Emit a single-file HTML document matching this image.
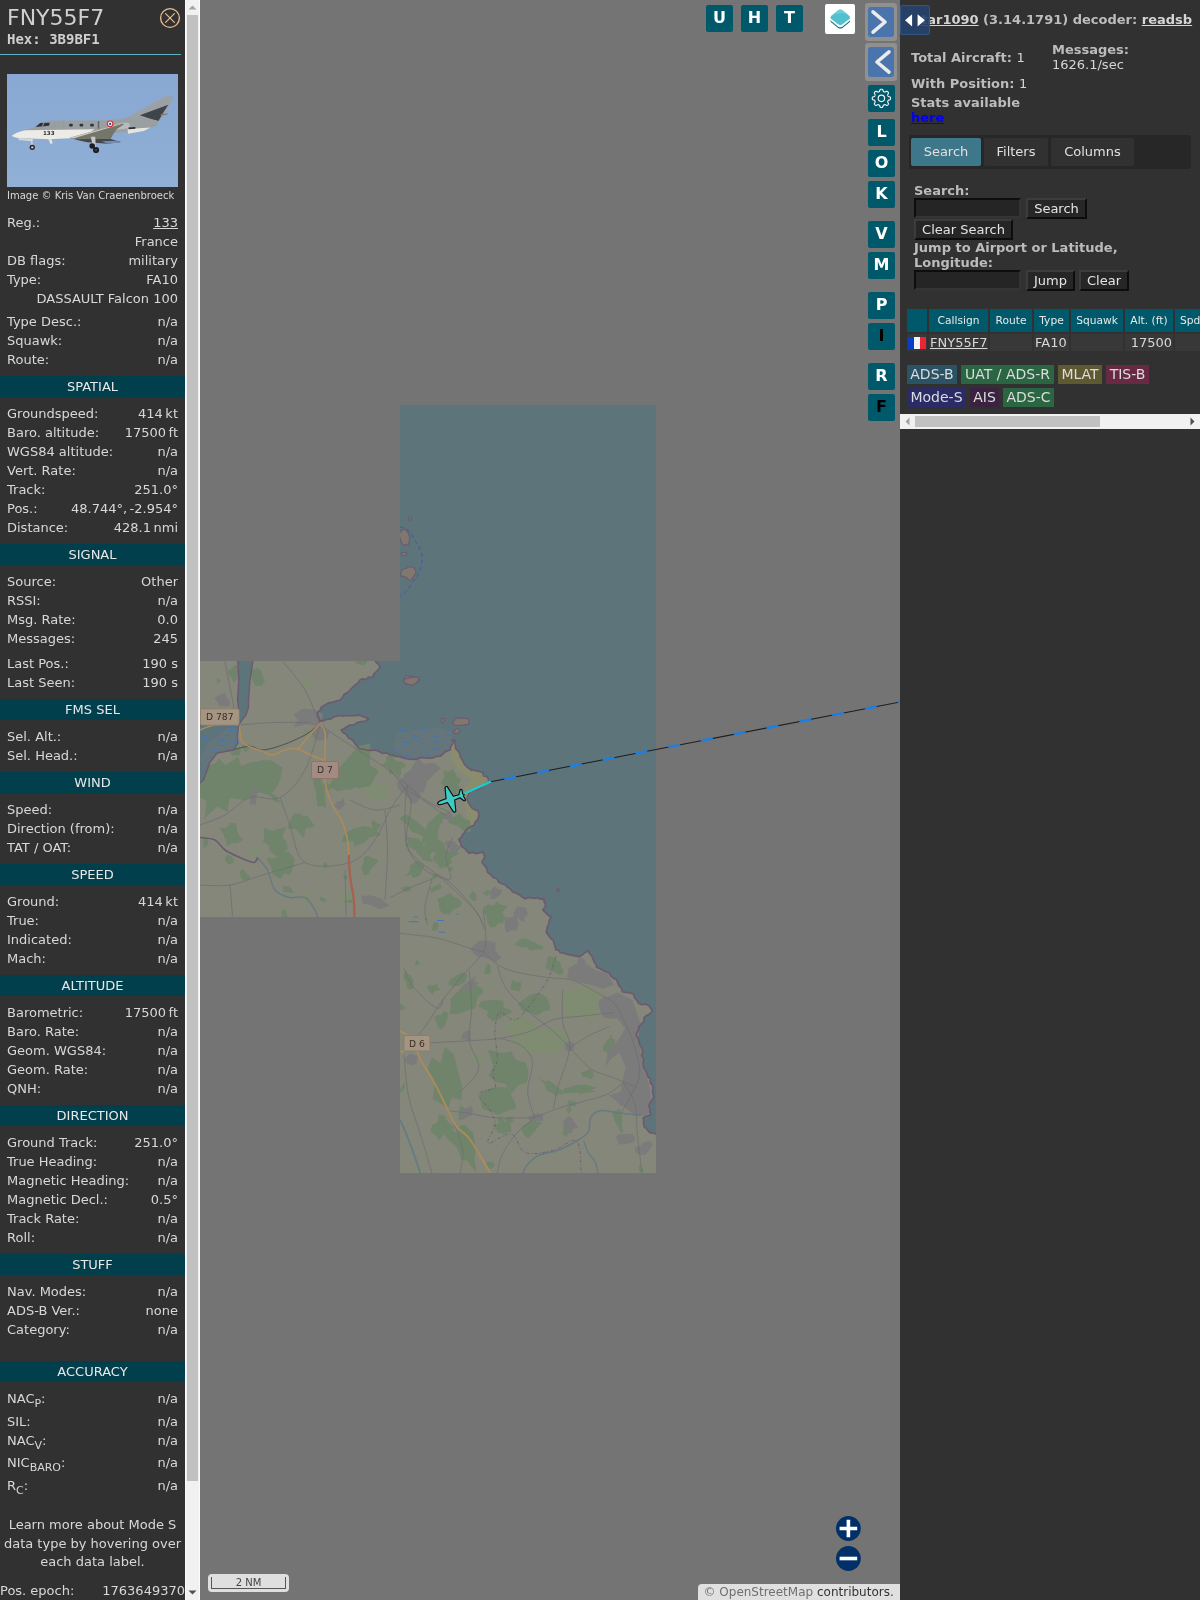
<!DOCTYPE html>
<html lang="en"><head><meta charset="utf-8"><title>tar1090</title>
<style>
html,body{margin:0;padding:0;width:1200px;height:1600px;overflow:hidden;background:#747474;font-family:"DejaVu Sans","Liberation Sans",sans-serif;font-size:13px;color:#d8d8d8}
#map{position:absolute;left:200px;top:0;width:700px;height:1600px;background:#747474;overflow:hidden}
#left{position:absolute;left:0;top:0;width:185px;height:1600px;background:#313131;overflow:hidden}
#lscroll{position:absolute;left:185px;top:0;width:15px;height:1600px;background:#f1f1f1;box-shadow:inset 1px 0 #fbfbfb,inset -1px 0 #fbfbfb}
#lscroll .thumb{position:absolute;left:2px;width:11px;top:15px;height:1466px;background:#c1c1c1}
#lscroll .arr{position:absolute;left:0}
#right{position:absolute;left:900px;top:0;width:300px;height:1600px;background:#313131;overflow:hidden}
.rw{position:absolute;left:7px;width:171px;height:18px;line-height:18px;font-size:13px;white-space:nowrap}
.rw .l{position:absolute;left:0;top:0}
.rw .v{position:absolute;right:0;top:0}
.rw .u{margin-left:2.5px}
.rw sub{font-size:11px;vertical-align:baseline;position:relative;top:4px;line-height:0}
.hd{position:absolute;left:0;width:185px;height:21px;line-height:21px;background:#003f4b;color:#e8e8e8;text-align:center;font-size:13px}
.learn{position:absolute;left:0;width:185px;text-align:center;line-height:18.5px;font-size:13px}
.rt{position:absolute;margin-top:1px;font-size:13px;line-height:16px;white-space:nowrap;color:#bcbcbc}
.b{font-weight:bold}
.n{font-weight:normal;color:#d6d6d6}
#tog{position:absolute;left:0;top:5px;width:30px;height:30px;background:rgba(38,68,108,.9);border:1px solid #34557f;box-sizing:border-box;border-radius:2px}
#tog svg{position:absolute;left:-1px;top:-1px}
#tabs{position:absolute;left:9px;top:135px;width:282px;height:34px;background:#272727;border-radius:3px}
.tab{position:absolute;top:3px;height:28px;line-height:27px;text-align:center;background:#313131;border-radius:2px;font-size:13px;color:#e0e0e0}
.tab.act{background:#3e7789}
.inp{position:absolute;width:107px;height:20px;box-sizing:border-box;background:#252525;border:2px solid;border-color:#0d0d0d #343434 #343434 #0d0d0d}
.btn{position:absolute;margin-top:-1px;height:17px;line-height:18px;text-align:center;font-size:13px;color:#e4e4e4;background:#262626;border:2px solid;border-color:#3c3c3c #0d0d0d #0d0d0d #3c3c3c;box-sizing:content-box}
.th{position:absolute;top:309px;height:23px;line-height:24px;background:#00596b;color:#e8e8e8;font-size:10.67px;text-align:center;overflow:hidden;white-space:nowrap}
.td{position:absolute;top:334px;height:17px;line-height:17px;background:#383838;font-size:13px;color:#d8d8d8;white-space:nowrap}
.lg{position:absolute;height:19px;line-height:19px;text-align:center;font-size:14px;color:#dcdcdc;white-space:nowrap}
#hscroll{position:absolute;left:0;top:414px;width:300px;height:15px;background:#f1f1f1}
#hscroll .thumb{position:absolute;left:15px;top:2px;width:185px;height:11px;background:#c1c1c1}
.mb{position:absolute;width:27px;height:27px;line-height:26px;text-align:center;background:#00596b;color:#fff;font-weight:bold;font-size:16px;border-radius:2px}
.mb.k{color:#000}
#layers{position:absolute;left:625px;top:4px;width:30px;height:30px;background:#fff;border-radius:2px}
.tgo{position:absolute;left:665px;width:32px;height:38px;background:#909090;border-radius:3px}
.tgi{position:absolute;left:3px;top:4px;width:26px;height:30px;background:#4a74ac;border-radius:3px}
#scale{position:absolute;left:8px;top:1574px;width:81px;height:18px;background:#dfdfdf;border-radius:4px}
#scale .in{position:absolute;left:3px;top:3px;width:73px;height:11px;border:1px solid #555;border-top:none;font-size:10px;line-height:12px;text-align:center;color:#444}
#attr{position:absolute;right:0;top:1584px;height:16px;width:202px;box-sizing:border-box;padding-left:5.5px;line-height:17px;font-size:12px;color:#333;background:#e0e0e0;border-top-left-radius:4px;white-space:nowrap}
#left,#right,#map,#lscroll{will-change:transform}

</style></head>
<body>
<div id="map">
<svg id="mapsvg" width="700" height="1600" viewBox="200 0 700 1600" style="position:absolute;left:0;top:0">
<defs><clipPath id="tiles"><rect x="400" y="405" width="256" height="256"/><rect x="144" y="661" width="512" height="256"/><rect x="400" y="917" width="256" height="256"/></clipPath></defs>
<defs><clipPath id="landclip"><polygon points="375.0,661.0 376.3,662.4 378.7,664.4 380.0,667.5 378.2,669.7 375.3,672.5 373.4,674.9 372.5,677.5 368.4,677.2 366.1,679.5 362.3,678.8 360.0,680.0 357.8,683.5 355.2,684.8 353.5,686.5 350.0,690.0 348.3,692.0 344.2,694.2 342.1,698.2 340.0,700.0 335.5,701.4 332.8,702.2 328.9,702.8 325.0,705.0 321.5,706.9 320.4,709.8 317.5,712.5 317.9,715.6 319.1,717.9 320.0,721.2 324.0,720.7 326.1,719.5 330.1,719.2 333.8,717.0 337.7,715.6 340.0,715.5 343.2,716.1 345.9,715.5 349.0,715.9 353.9,715.7 357.5,715.1 360.0,715.5 363.3,716.8 366.0,717.6 368.8,718.8 365.7,721.0 361.2,721.6 356.5,722.9 354.1,724.8 350.0,725.0 347.8,726.2 343.9,728.7 341.2,730.0 343.0,732.4 346.1,734.2 348.7,738.1 352.5,740.0 354.2,742.4 357.3,746.7 360.0,748.8 362.8,749.0 367.6,750.2 372.0,750.5 375.0,750.0 378.3,751.1 382.2,753.3 387.3,753.0 390.0,755.0 392.6,755.1 396.1,756.4 400.2,756.6 402.2,757.7 406.4,758.7 410.0,759.2 414.7,759.4 417.5,758.9 421.6,757.3 425.0,758.0 429.6,758.2 433.3,757.8 436.0,756.5 440.0,756.2 442.5,754.5 445.7,751.1 450.0,750.0 451.0,746.1 453.0,742.7 455.0,740.5 451.8,740.2 452.5,740.6 455.3,742.5 455.2,744.9 455.8,748.8 457.7,750.7 459.7,753.4 460.6,757.3 462.6,760.3 464.7,764.7 467.8,767.7 469.3,768.5 471.7,770.5 473.5,770.0 476.8,770.8 479.8,771.7 482.9,772.5 483.5,775.8 486.8,776.3 488.1,778.5 489.2,782.2 486.3,782.9 483.3,785.7 479.9,788.5 477.1,789.6 472.3,790.6 469.3,792.7 467.4,796.8 467.0,799.7 468.6,803.0 469.7,804.5 471.7,807.8 475.3,810.1 477.5,810.2 478.9,813.8 478.7,816.0 477.8,819.6 475.0,822.3 474.0,825.3 470.6,826.6 466.7,829.5 464.7,832.3 462.2,835.1 461.8,836.9 458.8,839.3 461.0,843.9 461.2,846.3 464.9,848.4 466.0,850.4 469.3,853.3 472.2,852.4 476.6,853.6 480.6,852.4 483.3,852.2 484.3,855.7 484.5,858.0 482.4,860.7 482.2,862.7 485.1,866.2 486.8,868.5 487.6,872.1 490.3,874.3 492.9,877.3 497.2,878.8 498.9,882.3 502.0,883.7 505.3,884.8 506.8,886.6 511.3,889.9 512.4,891.9 516.0,893.0 520.2,895.3 521.9,897.0 525.3,898.8 528.4,897.4 534.1,898.4 537.0,897.7 540.6,899.2 544.0,898.8 544.2,902.4 545.5,903.6 545.2,907.0 542.8,910.0 545.0,911.9 547.7,914.9 551.0,917.0 549.3,920.3 548.7,924.0 547.1,927.6 546.8,929.4 546.3,932.2 548.8,935.8 550.8,938.5 553.3,940.3 554.1,943.5 554.9,945.5 555.7,949.7 558.5,950.1 560.4,952.7 563.7,953.1 567.3,954.3 571.7,955.2 574.7,955.9 579.0,956.7 582.2,955.3 584.4,952.9 588.3,950.8 589.3,953.1 592.0,956.3 593.0,959.0 594.3,962.3 596.2,964.3 596.5,967.2 600.0,968.6 602.9,970.5 606.0,971.6 609.3,973.0 611.3,976.3 613.9,978.5 616.4,979.5 617.5,982.3 619.2,986.4 621.4,987.8 622.2,991.7 625.2,992.3 629.0,992.7 633.8,994.0 634.4,997.5 637.6,1001.1 638.5,1003.3 641.2,1004.6 645.9,1004.1 649.0,1005.7 651.6,1009.6 652.5,1011.5 649.2,1014.4 646.8,1015.4 644.3,1017.3 643.7,1021.6 640.8,1024.3 638.9,1027.1 638.5,1029.8 636.7,1032.7 636.2,1036.0 638.1,1037.9 639.2,1041.7 639.5,1044.4 642.0,1047.7 642.6,1051.2 641.6,1055.7 643.5,1059.2 643.2,1061.7 643.2,1064.1 643.9,1068.1 645.3,1069.6 646.7,1073.3 648.0,1077.2 650.3,1078.6 650.3,1083.0 652.5,1085.0 653.0,1089.3 652.4,1091.8 653.7,1096.7 652.5,1099.6 649.6,1103.9 649.0,1106.0 650.1,1109.4 649.6,1112.2 651.3,1114.2 647.7,1116.1 645.8,1116.1 643.2,1117.7 643.7,1121.7 643.4,1123.1 644.3,1127.0 646.3,1128.4 647.4,1130.1 650.2,1132.8 652.1,1132.8 656.0,1134.0 660.0,1134.0 660.0,1180.0 190.0,1180.0 190.0,655.0 375.0,655.0"/></clipPath></defs>
<g clip-path="url(#tiles)">
<rect x="144" y="405" width="512" height="768" fill="#5d747b"/>
<polygon points="375.0,661.0 376.3,662.4 378.7,664.4 380.0,667.5 378.2,669.7 375.3,672.5 373.4,674.9 372.5,677.5 368.4,677.2 366.1,679.5 362.3,678.8 360.0,680.0 357.8,683.5 355.2,684.8 353.5,686.5 350.0,690.0 348.3,692.0 344.2,694.2 342.1,698.2 340.0,700.0 335.5,701.4 332.8,702.2 328.9,702.8 325.0,705.0 321.5,706.9 320.4,709.8 317.5,712.5 317.9,715.6 319.1,717.9 320.0,721.2 324.0,720.7 326.1,719.5 330.1,719.2 333.8,717.0 337.7,715.6 340.0,715.5 343.2,716.1 345.9,715.5 349.0,715.9 353.9,715.7 357.5,715.1 360.0,715.5 363.3,716.8 366.0,717.6 368.8,718.8 365.7,721.0 361.2,721.6 356.5,722.9 354.1,724.8 350.0,725.0 347.8,726.2 343.9,728.7 341.2,730.0 343.0,732.4 346.1,734.2 348.7,738.1 352.5,740.0 354.2,742.4 357.3,746.7 360.0,748.8 362.8,749.0 367.6,750.2 372.0,750.5 375.0,750.0 378.3,751.1 382.2,753.3 387.3,753.0 390.0,755.0 392.6,755.1 396.1,756.4 400.2,756.6 402.2,757.7 406.4,758.7 410.0,759.2 414.7,759.4 417.5,758.9 421.6,757.3 425.0,758.0 429.6,758.2 433.3,757.8 436.0,756.5 440.0,756.2 442.5,754.5 445.7,751.1 450.0,750.0 451.0,746.1 453.0,742.7 455.0,740.5 451.8,740.2 452.5,740.6 455.3,742.5 455.2,744.9 455.8,748.8 457.7,750.7 459.7,753.4 460.6,757.3 462.6,760.3 464.7,764.7 467.8,767.7 469.3,768.5 471.7,770.5 473.5,770.0 476.8,770.8 479.8,771.7 482.9,772.5 483.5,775.8 486.8,776.3 488.1,778.5 489.2,782.2 486.3,782.9 483.3,785.7 479.9,788.5 477.1,789.6 472.3,790.6 469.3,792.7 467.4,796.8 467.0,799.7 468.6,803.0 469.7,804.5 471.7,807.8 475.3,810.1 477.5,810.2 478.9,813.8 478.7,816.0 477.8,819.6 475.0,822.3 474.0,825.3 470.6,826.6 466.7,829.5 464.7,832.3 462.2,835.1 461.8,836.9 458.8,839.3 461.0,843.9 461.2,846.3 464.9,848.4 466.0,850.4 469.3,853.3 472.2,852.4 476.6,853.6 480.6,852.4 483.3,852.2 484.3,855.7 484.5,858.0 482.4,860.7 482.2,862.7 485.1,866.2 486.8,868.5 487.6,872.1 490.3,874.3 492.9,877.3 497.2,878.8 498.9,882.3 502.0,883.7 505.3,884.8 506.8,886.6 511.3,889.9 512.4,891.9 516.0,893.0 520.2,895.3 521.9,897.0 525.3,898.8 528.4,897.4 534.1,898.4 537.0,897.7 540.6,899.2 544.0,898.8 544.2,902.4 545.5,903.6 545.2,907.0 542.8,910.0 545.0,911.9 547.7,914.9 551.0,917.0 549.3,920.3 548.7,924.0 547.1,927.6 546.8,929.4 546.3,932.2 548.8,935.8 550.8,938.5 553.3,940.3 554.1,943.5 554.9,945.5 555.7,949.7 558.5,950.1 560.4,952.7 563.7,953.1 567.3,954.3 571.7,955.2 574.7,955.9 579.0,956.7 582.2,955.3 584.4,952.9 588.3,950.8 589.3,953.1 592.0,956.3 593.0,959.0 594.3,962.3 596.2,964.3 596.5,967.2 600.0,968.6 602.9,970.5 606.0,971.6 609.3,973.0 611.3,976.3 613.9,978.5 616.4,979.5 617.5,982.3 619.2,986.4 621.4,987.8 622.2,991.7 625.2,992.3 629.0,992.7 633.8,994.0 634.4,997.5 637.6,1001.1 638.5,1003.3 641.2,1004.6 645.9,1004.1 649.0,1005.7 651.6,1009.6 652.5,1011.5 649.2,1014.4 646.8,1015.4 644.3,1017.3 643.7,1021.6 640.8,1024.3 638.9,1027.1 638.5,1029.8 636.7,1032.7 636.2,1036.0 638.1,1037.9 639.2,1041.7 639.5,1044.4 642.0,1047.7 642.6,1051.2 641.6,1055.7 643.5,1059.2 643.2,1061.7 643.2,1064.1 643.9,1068.1 645.3,1069.6 646.7,1073.3 648.0,1077.2 650.3,1078.6 650.3,1083.0 652.5,1085.0 653.0,1089.3 652.4,1091.8 653.7,1096.7 652.5,1099.6 649.6,1103.9 649.0,1106.0 650.1,1109.4 649.6,1112.2 651.3,1114.2 647.7,1116.1 645.8,1116.1 643.2,1117.7 643.7,1121.7 643.4,1123.1 644.3,1127.0 646.3,1128.4 647.4,1130.1 650.2,1132.8 652.1,1132.8 656.0,1134.0 660.0,1134.0 660.0,1180.0 190.0,1180.0 190.0,655.0 375.0,655.0" fill="#85877b"/>
<path d="M451.8 740.2 L457.7 750.7 L464.7 764.7 L471.7 770.5 L479.8 771.7 L486.8 776.3 L489.2 782.2 L483.3 785.7 L469.3 792.7 L467.0 799.7 L471.7 807.8 L477.5 810.2 L478.7 816.0 L474.0 825.3 L464.7 832.3 L460.0 827.7 L467.0 818.3 L464.7 804.3 L460.0 795.0 L467.0 785.7 L471.7 778.7 L460.0 771.7 L450.7 757.7 Z" fill="#8a8c6e"/>
<g clip-path="url(#landclip)"><path d="M509.9 1122.6 L507.3 1121.2 L504.3 1119.3 L506.8 1117.3 L510.0 1116.4 L514.0 1116.8 L512.7 1119.5 L514.2 1122.4 Z" fill="#6f846a"/><path d="M486.3 868.0 L484.2 867.7 L484.9 862.5 L486.5 859.7 L488.4 855.7 L488.6 860.5 L490.3 863.4 L488.0 866.3 Z" fill="#7f8c72"/><path d="M494.4 1164.9 L493.9 1166.7 L491.5 1169.1 L488.2 1167.4 L486.5 1164.8 L486.8 1161.1 L491.5 1162.3 L494.1 1162.8 Z" fill="#6f846a"/><path d="M498.5 673.7 L496.7 674.8 L495.2 673.8 L496.1 672.2 L496.7 670.4 L498.8 670.3 L499.4 671.5 L501.1 672.9 Z" fill="#6f846a"/><path d="M309.5 739.1 L308.6 737.0 L309.6 736.0 L310.3 733.9 L312.9 735.6 L313.8 738.0 L314.1 740.4 L311.7 740.4 Z" fill="#7f8c72"/><path d="M627.3 1039.5 L624.8 1038.3 L624.5 1036.5 L623.3 1033.6 L627.4 1034.7 L630.8 1034.2 L633.9 1036.7 L629.5 1038.2 Z" fill="#6f846a"/><path d="M433.4 992.3 L433.2 995.3 L429.1 991.1 L426.6 986.6 L429.1 986.8 L429.2 983.9 L433.2 987.9 L434.9 991.8 Z" fill="#6f846a"/><path d="M540.9 893.0 L540.7 894.6 L538.0 894.9 L535.2 894.1 L534.5 892.2 L536.6 891.4 L538.5 890.7 L540.5 891.7 Z" fill="#6f846a"/><path d="M563.1 931.6 L559.7 930.9 L557.8 931.2 L556.9 929.4 L556.3 926.4 L559.2 924.0 L562.3 925.3 L562.5 928.3 Z" fill="#7f8c72"/><path d="M599.6 832.4 L595.6 829.7 L597.4 827.0 L599.0 824.5 L603.2 825.9 L606.6 828.7 L605.2 831.4 L603.5 833.5 Z" fill="#6f846a"/><path d="M458.2 819.4 L458.3 817.7 L459.1 816.4 L461.4 814.1 L462.5 817.5 L462.1 819.6 L460.9 820.5 L459.5 820.5 Z" fill="#6f846a"/><path d="M514.9 990.3 L511.2 989.7 L510.7 984.5 L513.1 979.6 L516.5 982.3 L520.6 981.3 L521.3 986.7 L518.7 991.7 Z" fill="#6f846a"/><path d="M246.7 768.2 L246.1 766.7 L247.7 765.0 L249.4 764.7 L250.1 765.3 L250.2 766.1 L250.1 767.8 L248.4 767.8 Z" fill="#7f8c72"/><path d="M344.5 879.5 L343.7 878.2 L342.7 876.1 L344.9 875.8 L347.0 875.6 L348.0 877.6 L346.7 878.7 L346.1 880.0 Z" fill="#6f846a"/><path d="M448.3 773.6 L447.7 774.3 L444.2 773.8 L438.8 770.4 L442.2 770.2 L442.0 768.6 L446.2 770.3 L451.0 773.2 Z" fill="#7f8c72"/><path d="M281.3 915.1 L281.6 912.6 L282.6 909.3 L285.7 910.5 L286.4 913.5 L288.0 916.7 L285.0 916.8 L282.2 919.0 Z" fill="#6f846a"/><path d="M520.5 1070.3 L517.6 1066.5 L514.5 1065.3 L516.1 1062.4 L516.5 1060.4 L518.2 1060.7 L521.4 1062.5 L521.1 1066.5 Z" fill="#6f846a"/><path d="M305.1 900.7 L303.2 898.7 L303.8 896.0 L304.5 891.6 L308.4 892.0 L311.3 894.5 L309.2 898.0 L308.0 900.9 Z" fill="#7f8c72"/><path d="M554.1 958.8 L552.7 959.9 L550.3 960.3 L549.0 958.1 L551.3 956.3 L552.7 955.5 L554.3 955.7 L555.1 957.2 Z" fill="#7f8c72"/><path d="M436.8 745.3 L434.2 745.1 L437.0 742.6 L438.3 740.7 L441.1 739.1 L441.6 741.9 L440.2 744.9 L437.9 746.2 Z" fill="#7f8c72"/><path d="M245.4 769.9 L245.9 767.8 L247.5 765.4 L249.9 764.0 L250.7 764.8 L251.8 765.5 L249.8 767.8 L247.3 770.1 Z" fill="#6f846a"/><path d="M618.6 884.9 L615.1 887.1 L610.8 885.2 L608.7 881.3 L609.1 877.1 L613.1 876.0 L617.0 877.6 L618.4 881.1 Z" fill="#6f846a"/><path d="M248.7 879.6 L245.7 880.5 L241.6 879.1 L240.0 875.1 L239.6 871.2 L243.1 869.0 L246.6 873.7 L250.3 876.7 Z" fill="#6f846a"/><path d="M554.7 863.1 L550.3 863.7 L548.0 859.6 L551.5 856.6 L555.0 857.2 L558.7 856.9 L559.9 860.3 L558.8 864.0 Z" fill="#6f846a"/><path d="M429.2 989.6 L427.9 987.2 L432.7 985.4 L437.8 983.9 L437.4 987.1 L440.5 989.7 L434.4 991.1 L431.5 990.4 Z" fill="#6f846a"/><path d="M324.2 867.2 L323.1 865.8 L323.2 864.5 L323.8 862.8 L326.6 863.1 L327.7 865.4 L327.0 866.7 L326.5 868.6 Z" fill="#6f846a"/><path d="M377.9 772.0 L375.1 770.4 L375.7 768.5 L375.6 765.7 L379.5 767.4 L382.6 768.7 L383.9 771.3 L381.6 773.1 Z" fill="#7f8c72"/><path d="M416.5 817.2 L413.8 814.5 L411.9 812.5 L411.3 809.9 L411.3 807.8 L413.1 809.1 L414.4 811.2 L416.8 814.4 Z" fill="#7f8c72"/><path d="M326.9 790.2 L325.6 787.8 L324.1 784.9 L326.5 782.3 L328.9 784.4 L332.1 784.4 L332.3 787.9 L329.8 790.3 Z" fill="#6f846a"/><path d="M489.7 669.6 L487.9 671.0 L486.2 671.4 L484.5 670.6 L487.4 667.5 L489.6 666.3 L493.2 663.9 L493.0 666.8 Z" fill="#6f846a"/><path d="M474.3 1063.3 L471.6 1060.5 L474.6 1057.2 L478.8 1055.1 L481.5 1058.1 L484.1 1061.6 L480.3 1065.0 L476.5 1064.8 Z" fill="#7f8c72"/><path d="M310.8 734.2 L309.1 734.8 L306.0 733.9 L302.3 732.0 L304.5 731.3 L303.7 729.2 L307.5 730.8 L310.3 732.6 Z" fill="#6f846a"/><path d="M507.6 1092.3 L505.8 1094.4 L503.0 1093.0 L499.9 1092.9 L499.0 1090.4 L500.3 1087.7 L503.9 1088.9 L507.9 1089.3 Z" fill="#7f8c72"/><path d="M431.2 914.4 L429.6 914.5 L431.5 908.7 L433.1 904.5 L434.8 902.8 L435.9 904.1 L434.0 909.5 L432.6 913.6 Z" fill="#7f8c72"/><path d="M581.2 815.4 L579.1 817.5 L574.6 813.2 L571.3 808.8 L573.4 807.2 L575.8 807.1 L578.7 809.3 L581.8 812.8 Z" fill="#6f846a"/><path d="M489.4 1063.8 L487.1 1063.6 L487.2 1062.4 L487.5 1061.3 L489.7 1059.5 L492.7 1061.0 L494.1 1062.8 L492.9 1064.7 Z" fill="#7f8c72"/><path d="M613.6 980.0 L612.4 976.4 L610.7 973.3 L613.2 970.3 L616.2 968.1 L617.0 972.3 L617.5 974.8 L615.9 976.6 Z" fill="#6f846a"/><path d="M549.2 1132.9 L550.0 1130.0 L551.6 1127.4 L554.4 1125.3 L556.3 1125.9 L557.0 1127.9 L555.4 1131.2 L551.4 1134.6 Z" fill="#7f8c72"/><path d="M218.7 725.2 L216.7 726.1 L214.3 722.7 L213.2 716.8 L216.0 713.4 L219.4 717.2 L221.1 721.1 L220.1 724.2 Z" fill="#7f8c72"/><path d="M493.1 771.3 L491.2 771.4 L493.0 769.2 L493.8 766.7 L494.7 768.1 L495.0 769.0 L495.5 770.5 L494.0 771.4 Z" fill="#6f846a"/><path d="M532.2 758.4 L532.7 755.9 L531.9 753.0 L534.2 753.0 L536.3 755.8 L538.6 759.2 L536.3 759.7 L534.9 761.7 Z" fill="#7f8c72"/><path d="M528.7 667.2 L528.0 670.4 L526.4 669.4 L524.3 669.8 L525.1 666.4 L526.6 665.1 L527.8 663.6 L529.2 664.4 Z" fill="#7f8c72"/><path d="M399.0 1010.4 L396.8 1008.2 L396.5 1006.2 L397.4 1003.9 L401.4 1004.0 L404.5 1006.7 L404.3 1009.2 L401.8 1009.9 Z" fill="#6f846a"/><path d="M517.5 1087.0 L517.7 1084.2 L518.6 1081.9 L521.4 1079.8 L523.3 1082.7 L524.9 1085.2 L523.1 1087.8 L520.0 1089.5 Z" fill="#7f8c72"/><path d="M567.7 808.6 L565.6 807.5 L566.8 805.8 L566.4 803.8 L568.7 803.5 L570.8 804.6 L570.7 806.5 L569.3 807.4 Z" fill="#6f846a"/><path d="M593.6 1075.6 L591.8 1079.5 L587.3 1077.5 L582.6 1077.0 L580.9 1072.3 L586.0 1071.0 L589.4 1069.2 L593.4 1071.6 Z" fill="#6f846a"/><path d="M412.6 768.8 L409.1 770.4 L407.1 767.8 L409.7 765.5 L411.5 763.3 L415.5 762.9 L417.6 765.7 L415.6 768.5 Z" fill="#7f8c72"/><path d="M416.0 965.0 L414.8 963.8 L415.6 961.7 L417.1 960.1 L418.3 961.0 L418.7 962.1 L420.0 964.3 L417.6 965.0 Z" fill="#6f846a"/><path d="M561.9 741.1 L563.9 744.0 L558.8 744.5 L555.4 742.6 L553.8 740.6 L556.4 739.3 L559.2 737.6 L562.4 739.4 Z" fill="#6f846a"/><path d="M636.0 1054.3 L634.4 1056.6 L631.3 1056.9 L628.8 1055.6 L625.2 1053.1 L626.4 1048.6 L632.1 1049.2 L638.2 1049.7 Z" fill="#6f846a"/><path d="M611.2 694.9 L610.8 692.7 L614.1 690.7 L619.0 689.8 L620.5 692.4 L618.5 694.8 L615.6 696.5 L612.9 695.9 Z" fill="#6f846a"/><path d="M642.5 1172.4 L640.5 1172.1 L638.5 1169.8 L639.2 1168.0 L638.5 1165.4 L640.3 1165.8 L642.0 1167.8 L643.4 1170.7 Z" fill="#6f846a"/><path d="M229.3 740.0 L225.3 741.7 L223.0 737.1 L221.1 734.2 L222.6 731.6 L225.5 731.6 L229.1 732.2 L229.1 735.9 Z" fill="#6f846a"/><path d="M311.4 736.0 L312.3 738.5 L308.1 735.3 L303.5 732.6 L302.8 730.3 L305.3 730.2 L309.3 733.4 L312.3 735.4 Z" fill="#7f8c72"/><path d="M584.7 987.4 L583.1 984.9 L582.1 983.0 L582.7 981.1 L583.4 977.7 L585.6 979.3 L585.9 982.5 L587.1 986.4 Z" fill="#7f8c72"/><path d="M322.5 873.5 L321.1 874.4 L319.7 872.9 L318.0 870.8 L320.5 870.3 L322.1 868.1 L322.7 871.0 L324.9 872.8 Z" fill="#7f8c72"/><path d="M507.9 771.3 L507.0 773.8 L502.7 772.1 L499.8 768.7 L502.4 767.5 L503.5 766.5 L506.7 766.3 L506.9 769.3 Z" fill="#6f846a"/><path d="M533.7 815.3 L532.2 813.9 L529.5 812.3 L527.7 807.6 L528.7 807.1 L529.8 806.8 L533.1 810.2 L533.9 814.0 Z" fill="#7f8c72"/><path d="M462.0 732.7 L460.6 734.0 L458.0 735.5 L457.2 733.0 L458.6 730.4 L460.5 729.0 L463.1 727.9 L464.5 730.1 Z" fill="#7f8c72"/><path d="M571.3 962.9 L569.8 960.9 L568.0 960.2 L568.5 958.1 L568.7 955.8 L570.6 956.3 L571.7 958.9 L571.1 960.4 Z" fill="#7f8c72"/><path d="M610.6 908.4 L611.8 906.0 L613.8 903.3 L617.8 900.6 L617.9 902.9 L619.8 903.7 L616.5 906.9 L612.5 909.2 Z" fill="#6f846a"/><path d="M571.0 1105.8 L567.3 1104.4 L568.0 1100.6 L571.8 1100.4 L574.6 1101.3 L576.2 1103.9 L575.5 1106.7 L572.7 1106.3 Z" fill="#6f846a"/><path d="M639.9 776.6 L639.6 775.7 L639.8 773.8 L641.7 773.8 L642.4 774.5 L643.8 775.2 L642.4 777.1 L640.4 777.9 Z" fill="#6f846a"/><path d="M526.3 715.9 L523.6 717.9 L519.2 716.7 L517.0 714.3 L515.0 711.6 L518.3 710.8 L522.0 709.6 L527.3 712.3 Z" fill="#6f846a"/><path d="M542.9 752.8 L538.5 750.4 L536.3 746.5 L534.1 740.8 L538.1 737.8 L542.1 740.7 L543.9 744.0 L544.3 747.8 Z" fill="#6f846a"/><path d="M567.0 1136.9 L562.5 1134.4 L563.3 1128.4 L563.8 1124.4 L566.7 1121.5 L569.5 1124.5 L571.4 1128.3 L568.8 1130.9 Z" fill="#6f846a"/><path d="M206.7 740.7 L203.6 737.2 L204.1 730.5 L208.8 729.2 L212.0 725.1 L213.0 729.5 L214.1 734.0 L210.5 736.8 Z" fill="#7f8c72"/><path d="M449.2 1141.2 L446.7 1137.5 L445.4 1134.8 L444.3 1130.8 L446.4 1131.0 L448.0 1130.0 L450.5 1133.4 L449.9 1137.4 Z" fill="#6f846a"/><path d="M325.9 901.3 L324.7 902.2 L321.8 901.3 L319.6 899.8 L319.7 898.7 L319.8 897.1 L323.4 897.4 L326.3 899.7 Z" fill="#6f846a"/><path d="M459.8 997.3 L457.1 995.8 L456.7 993.7 L458.0 992.2 L460.2 991.7 L463.0 992.0 L463.6 994.2 L462.9 996.5 Z" fill="#6f846a"/><path d="M205.9 846.6 L203.7 848.2 L203.5 841.7 L202.8 836.2 L205.0 837.2 L206.2 838.8 L208.5 841.3 L207.4 845.6 Z" fill="#6f846a"/><path d="M232.9 863.3 L228.9 864.6 L226.5 861.8 L224.8 859.9 L225.4 857.3 L227.7 854.8 L231.1 856.1 L233.7 859.1 Z" fill="#6f846a"/><path d="M575.5 933.2 L571.7 931.3 L568.9 926.9 L572.2 923.7 L573.4 918.6 L575.7 923.7 L579.5 925.4 L578.2 929.9 Z" fill="#7f8c72"/><path d="M422.4 1156.6 L423.4 1153.8 L425.6 1151.5 L428.9 1150.5 L432.1 1151.0 L430.3 1154.0 L428.4 1156.2 L425.0 1157.6 Z" fill="#7f8c72"/><path d="M376.3 830.0 L373.6 829.8 L372.4 826.6 L371.0 822.3 L373.8 819.7 L376.6 822.8 L381.3 824.4 L378.8 828.7 Z" fill="#6f846a"/><path d="M581.1 1091.6 L581.6 1090.4 L583.7 1088.0 L588.4 1086.8 L593.2 1086.4 L590.9 1089.5 L585.5 1092.2 L579.1 1095.0 Z" fill="#6f846a"/><path d="M435.0 930.4 L432.0 930.5 L432.7 925.1 L434.8 921.6 L436.7 922.5 L438.4 922.9 L438.5 926.4 L437.2 930.2 Z" fill="#6f846a"/><path d="M458.8 1120.9 L458.7 1114.8 L458.6 1110.5 L460.8 1104.7 L463.2 1106.9 L464.8 1108.2 L466.1 1112.8 L462.7 1118.3 Z" fill="#6f846a"/><path d="M425.1 719.1 L429.1 715.8 L433.3 714.9 L437.0 714.7 L440.2 716.5 L438.7 719.5 L434.2 720.4 L430.9 720.1 Z" fill="#7f8c72"/><path d="M490.8 970.2 L490.1 974.6 L486.8 973.9 L483.7 973.5 L485.3 969.5 L485.5 966.6 L488.1 963.3 L490.7 966.4 Z" fill="#6f846a"/><path d="M503.0 766.0 L499.7 764.7 L501.2 760.4 L503.6 758.2 L505.7 758.9 L507.0 760.2 L508.6 763.2 L505.4 764.2 Z" fill="#6f846a"/><path d="M243.5 750.2 L243.1 748.2 L242.0 744.2 L246.0 744.5 L249.8 744.7 L249.6 748.5 L247.7 750.6 L245.3 751.9 Z" fill="#6f846a"/><path d="M461.4 841.7 L460.4 839.0 L464.3 837.2 L467.5 836.1 L468.4 838.1 L467.6 839.9 L467.3 843.2 L463.2 843.8 Z" fill="#6f846a"/><path d="M568.4 817.6 L568.1 814.4 L570.4 810.9 L573.9 813.3 L576.0 815.3 L577.9 819.5 L573.4 821.1 L569.0 821.9 Z" fill="#6f846a"/><path d="M313.6 752.9 L311.4 751.8 L309.3 751.2 L308.4 748.9 L308.8 747.2 L310.6 748.0 L312.1 748.9 L314.7 751.2 Z" fill="#7f8c72"/><path d="M363.5 786.8 L361.8 788.1 L360.0 788.1 L357.5 788.2 L358.3 786.2 L358.7 784.8 L360.5 783.2 L361.7 785.4 Z" fill="#6f846a"/><path d="M399.1 1093.6 L397.1 1093.0 L400.9 1088.3 L403.8 1083.1 L405.5 1084.2 L404.9 1087.2 L403.8 1090.3 L401.4 1092.1 Z" fill="#6f846a"/><path d="M527.4 799.3 L523.4 798.2 L519.0 798.0 L518.8 793.7 L517.3 790.1 L520.4 789.4 L524.1 792.4 L528.5 796.0 Z" fill="#6f846a"/><path d="M456.1 822.0 L455.4 820.7 L458.2 819.2 L460.6 817.4 L461.7 818.2 L461.9 819.6 L459.7 821.3 L457.9 821.7 Z" fill="#6f846a"/><path d="M343.2 780.3 L339.5 780.3 L336.9 778.8 L337.6 775.9 L341.3 775.3 L343.5 774.7 L344.1 776.1 L345.8 777.8 Z" fill="#6f846a"/><path d="M506.5 844.5 L502.9 844.3 L499.7 844.1 L499.8 841.0 L500.7 839.1 L502.2 835.5 L505.7 837.5 L507.3 840.9 Z" fill="#6f846a"/><path d="M219.1 683.0 L218.0 683.5 L216.2 682.5 L216.9 680.7 L216.9 678.1 L219.1 678.9 L220.8 680.4 L220.2 682.4 Z" fill="#6f846a"/><path d="M367.2 662.5 L363.5 665.4 L358.8 664.0 L355.5 663.3 L355.2 661.0 L354.2 657.1 L359.6 658.4 L365.6 658.2 Z" fill="#6f846a"/><path d="M538.3 707.8 L539.1 705.6 L539.3 701.9 L543.5 701.4 L547.8 700.5 L546.8 704.2 L543.9 707.9 L539.4 710.3 Z" fill="#7f8c72"/><path d="M486.5 896.0 L484.6 894.0 L481.5 893.0 L484.7 891.9 L486.3 890.1 L489.9 890.7 L489.5 892.7 L489.4 894.4 Z" fill="#6f846a"/><path d="M644.1 991.2 L642.1 990.1 L640.3 988.3 L640.0 986.0 L639.4 982.5 L641.9 983.1 L643.6 986.5 L644.4 989.0 Z" fill="#6f846a"/><path d="M431.0 891.0 L429.6 889.4 L433.9 886.8 L439.2 883.8 L441.2 885.6 L441.3 888.2 L435.9 890.5 L431.3 893.4 Z" fill="#6f846a"/><path d="M476.3 901.0 L473.2 900.9 L471.0 898.8 L469.0 896.2 L470.3 893.9 L472.7 891.0 L476.2 894.4 L476.3 897.9 Z" fill="#6f846a"/><path d="M353.5 901.1 L351.2 902.9 L347.9 902.3 L344.7 902.6 L342.5 900.8 L345.2 899.3 L348.0 899.6 L350.7 899.6 Z" fill="#6f846a"/><path d="M396.1 763.1 L395.0 762.0 L396.4 757.6 L398.1 755.5 L399.3 754.8 L399.5 756.3 L398.8 758.5 L397.8 762.5 Z" fill="#7f8c72"/><path d="M580.9 813.4 L579.2 810.5 L581.1 808.2 L584.1 808.8 L585.2 811.8 L584.9 814.0 L584.6 817.2 L582.0 815.4 Z" fill="#7f8c72"/><path d="M305.7 687.8 L303.5 684.3 L306.0 680.2 L308.7 677.8 L310.9 679.3 L312.4 680.8 L312.5 684.2 L309.4 684.8 Z" fill="#7f8c72"/><path d="M517.7 745.3 L515.6 747.5 L513.0 750.6 L511.9 746.5 L508.3 744.1 L510.4 739.8 L514.5 738.7 L516.9 741.9 Z" fill="#6f846a"/><path d="M430.7 879.8 L432.3 876.6 L433.1 874.7 L435.4 873.5 L437.7 874.3 L437.6 876.7 L436.0 878.4 L434.2 878.7 Z" fill="#6f846a"/><path d="M338.1 898.9 L341.6 894.3 L346.3 890.9 L350.0 894.2 L355.4 895.0 L353.6 899.2 L348.4 900.5 L343.3 901.3 Z" fill="#7f8c72"/><path d="M631.8 908.5 L631.5 907.2 L633.1 904.5 L636.8 904.0 L637.4 905.6 L639.2 907.0 L635.5 909.1 L631.9 910.7 Z" fill="#6f846a"/><path d="M457.4 865.6 L455.4 866.2 L455.9 863.8 L456.7 862.7 L457.7 861.3 L458.8 862.6 L459.7 864.1 L459.0 865.9 Z" fill="#7f8c72"/><path d="M464.7 704.3 L464.7 702.6 L467.2 700.2 L469.5 700.4 L473.3 699.0 L472.0 701.6 L468.9 703.0 L466.0 705.4 Z" fill="#6f846a"/><path d="M386.5 752.1 L380.8 751.2 L377.7 751.1 L374.0 749.0 L375.2 747.2 L375.0 744.2 L379.8 746.3 L383.2 748.4 Z" fill="#7f8c72"/><path d="M521.5 887.9 L518.4 884.7 L520.0 878.8 L520.1 873.2 L523.2 873.6 L526.4 873.9 L526.8 879.6 L525.2 885.3 Z" fill="#7f8c72"/><path d="M262.1 852.8 L258.2 854.5 L255.3 857.0 L250.3 855.6 L252.3 851.5 L251.1 846.6 L256.7 846.5 L259.4 849.8 Z" fill="#7f8c72"/><path d="M292.1 890.0 L293.4 893.3 L287.9 892.3 L283.3 892.1 L283.1 889.4 L283.2 886.5 L288.3 886.6 L291.2 888.2 Z" fill="#6f846a"/><path d="M603.9 936.9 L601.7 938.9 L599.0 941.0 L593.9 940.6 L592.3 936.4 L597.0 934.8 L599.3 933.6 L604.3 932.9 Z" fill="#7f8c72"/><path d="M512.1 867.4 L509.7 865.7 L508.7 862.5 L507.7 860.0 L508.6 859.0 L510.1 857.4 L511.9 861.1 L511.3 863.4 Z" fill="#7f8c72"/><path d="M278.6 847.9 L276.7 850.0 L274.8 847.3 L275.3 845.0 L275.4 842.2 L278.4 840.2 L279.2 844.8 L279.9 846.8 Z" fill="#6f846a"/><path d="M505.5 804.0 L502.3 803.5 L501.3 800.0 L504.8 799.1 L506.4 797.1 L509.2 798.1 L510.3 801.2 L508.4 803.9 Z" fill="#6f846a"/><path d="M484.1 988.6 L485.0 985.7 L487.7 984.2 L490.5 982.4 L492.7 983.6 L491.9 986.1 L490.1 988.3 L487.4 988.4 Z" fill="#7f8c72"/><path d="M448.9 869.2 L449.4 867.5 L450.8 866.8 L452.1 867.2 L453.1 868.5 L452.4 869.9 L451.4 870.3 L449.4 871.7 Z" fill="#6f846a"/><path d="M410.5 889.9 L409.1 891.1 L406.0 892.1 L402.7 890.3 L400.0 887.8 L404.1 887.0 L407.3 885.6 L410.6 887.9 Z" fill="#6f846a"/><path d="M233.4 755.9 L229.9 752.7 L234.3 750.4 L236.3 747.7 L241.0 747.7 L240.4 752.4 L239.3 755.2 L236.6 755.3 Z" fill="#6f846a"/><path d="M280.0 801.7 L278.1 802.9 L273.6 800.4 L272.0 797.6 L269.5 794.5 L271.8 793.2 L276.4 796.2 L277.6 798.8 Z" fill="#6f846a"/><path d="M568.9 1114.2 L567.4 1112.1 L566.4 1109.2 L568.2 1107.3 L569.2 1106.1 L571.0 1106.1 L571.4 1109.4 L570.3 1111.7 Z" fill="#6f846a"/><path d="M509.0 835.8 L507.1 834.8 L506.5 833.0 L508.4 832.2 L510.3 831.8 L511.0 833.4 L513.5 835.2 L511.2 836.2 Z" fill="#6f846a"/></g>
<path d="M567.7 1040.7 L563.8 1046.8 L557.8 1054.7 L539.3 1052.9 L523.3 1052.8 L517.0 1046.3 L510.3 1040.7 L519.6 1035.7 L525.7 1030.4 L539.3 1030.7 L557.6 1026.8 L567.9 1033.5 Z" fill="#7f8c72"/>
<path d="M597.6 1003.3 L598.4 1011.2 L593.9 1020.8 L581.3 1015.6 L569.4 1019.8 L564.7 1011.0 L561.4 1003.3 L560.5 993.7 L572.0 990.4 L581.3 987.3 L592.5 987.9 L603.7 993.0 Z" fill="#7f8c72"/>
<path d="M538.8 1026.7 L541.4 1032.7 L531.9 1036.4 L520.7 1037.5 L511.2 1034.8 L504.9 1031.2 L506.0 1026.7 L507.2 1022.8 L513.2 1020.2 L520.7 1015.2 L529.2 1019.3 L534.5 1022.7 Z" fill="#7f8c72"/>
<path d="M385.5 790.0 L389.6 795.4 L383.6 799.5 L375.0 799.9 L368.9 796.8 L364.8 793.8 L362.7 790.0 L363.2 785.6 L369.4 783.8 L375.0 781.3 L381.0 783.3 L390.5 784.3 Z" fill="#7f8c72"/>
<path d="M488.8 1075.6 L493.4 1066.0 L488.2 1049.7 L502.8 1053.0 L511.0 1051.4 L515.8 1060.3 L525.1 1062.3 L528.7 1071.9 L526.9 1082.3 L517.8 1085.4 L511.6 1093.4 L504.8 1083.4 L496.9 1082.5 Z" fill="#6f846a"/>
<path d="M516.3 1108.3 L508.7 1110.4 L504.2 1112.2 L498.4 1115.3 L491.9 1112.0 L482.6 1109.1 L480.8 1102.0 L479.7 1094.0 L487.2 1089.6 L496.2 1087.1 L507.2 1087.3 L511.8 1096.3 L514.9 1102.2 Z" fill="#6f846a"/>
<path d="M435.1 1082.2 L427.9 1068.2 L431.6 1057.2 L440.6 1063.5 L444.8 1047.1 L453.7 1054.3 L457.9 1070.5 L461.9 1085.1 L461.7 1100.3 L451.6 1097.7 L448.4 1108.0 L441.4 1104.1 L432.7 1099.1 Z" fill="#6f846a"/>
<path d="M449.3 1014.2 L451.0 1006.0 L450.3 998.8 L459.6 989.8 L468.7 982.5 L475.2 984.2 L478.0 986.6 L481.3 987.9 L483.8 991.3 L477.4 997.7 L475.3 1007.9 L465.6 1011.2 L457.3 1014.0 Z" fill="#6f846a"/>
<path d="M492.7 1021.2 L486.9 1016.6 L488.0 1011.3 L478.1 1006.2 L481.4 1001.2 L488.9 1000.2 L495.7 999.7 L503.3 1001.1 L503.8 1007.6 L513.3 1011.4 L507.3 1014.9 L502.8 1016.4 L499.4 1018.9 Z" fill="#6f846a"/>
<path d="M530.9 1012.7 L522.8 1010.9 L518.0 1003.8 L524.0 998.9 L528.4 996.0 L533.3 993.7 L540.0 993.3 L546.8 997.2 L549.3 1003.9 L550.1 1010.3 L542.7 1011.6 L539.8 1014.1 L535.4 1015.2 Z" fill="#6f846a"/>
<path d="M550.1 970.2 L544.9 966.9 L547.0 963.9 L546.7 961.5 L546.9 958.7 L549.1 956.0 L554.9 958.4 L560.3 962.6 L561.2 967.1 L564.1 971.5 L562.4 974.0 L559.1 974.9 L554.2 971.5 Z" fill="#6f846a"/>
<path d="M457.9 1149.0 L447.3 1138.2 L446.7 1126.7 L457.9 1133.7 L458.7 1125.9 L464.8 1124.7 L473.3 1133.1 L475.3 1146.2 L475.5 1153.8 L474.3 1158.9 L476.7 1173.5 L467.1 1160.4 L461.2 1159.8 Z" fill="#6f846a"/>
<path d="M453.0 1131.2 L451.7 1138.5 L444.6 1134.6 L439.3 1140.4 L436.0 1135.2 L430.7 1131.9 L432.1 1125.2 L437.6 1121.9 L438.7 1114.0 L444.8 1116.1 L447.2 1121.0 L449.1 1123.3 L453.8 1125.9 Z" fill="#6f846a"/>
<path d="M503.6 1134.2 L500.8 1132.9 L497.7 1132.4 L496.0 1129.3 L492.4 1125.1 L498.2 1123.8 L497.7 1117.5 L501.9 1116.0 L504.4 1121.8 L510.3 1120.9 L510.8 1126.3 L511.4 1131.6 L506.2 1132.7 Z" fill="#6f846a"/>
<path d="M533.0 1133.2 L528.2 1138.2 L524.1 1135.0 L522.4 1131.6 L521.0 1128.6 L523.1 1125.2 L526.6 1123.5 L529.3 1121.8 L534.4 1116.9 L536.0 1121.6 L542.6 1122.2 L537.4 1127.2 L535.8 1130.2 Z" fill="#6f846a"/>
<path d="M581.4 1092.5 L575.2 1092.9 L564.6 1093.2 L561.9 1091.0 L563.8 1088.7 L570.2 1087.0 L576.4 1085.0 L586.0 1084.6 L591.6 1086.4 L597.8 1087.5 L590.9 1089.6 L596.1 1091.6 L588.1 1092.6 Z" fill="#6f846a"/>
<path d="M547.5 1091.6 L545.3 1087.4 L545.3 1085.0 L538.9 1078.5 L546.1 1081.7 L547.7 1079.9 L551.9 1082.6 L555.3 1085.6 L560.7 1089.5 L563.8 1094.7 L557.7 1093.4 L557.0 1096.4 L552.0 1093.0 Z" fill="#6f846a"/>
<path d="M440.5 1030.0 L438.6 1027.4 L437.2 1025.2 L436.5 1022.3 L434.0 1017.1 L437.9 1015.1 L440.8 1015.3 L444.4 1011.0 L448.0 1013.5 L447.2 1019.6 L445.7 1023.2 L444.8 1026.1 L442.8 1027.4 Z" fill="#6f846a"/>
<path d="M462.2 983.6 L459.1 985.7 L455.8 985.9 L451.5 986.1 L448.0 983.9 L450.3 979.3 L455.2 976.3 L459.0 974.0 L463.3 972.4 L466.2 973.9 L467.7 976.1 L465.8 979.2 L465.6 981.9 Z" fill="#6f846a"/>
<path d="M405.3 980.8 L403.5 977.7 L404.0 974.1 L405.6 970.8 L408.7 974.4 L410.7 975.3 L412.1 977.7 L413.4 980.5 L413.3 983.8 L413.3 988.7 L410.2 989.4 L407.0 988.7 L406.5 982.7 Z" fill="#6f846a"/>
<path d="M543.1 946.3 L542.8 949.3 L535.8 949.6 L530.9 950.4 L527.3 947.6 L522.1 947.3 L515.3 945.2 L516.4 942.2 L519.6 939.7 L525.2 938.1 L531.5 941.2 L534.6 942.6 L537.3 944.0 Z" fill="#6f846a"/>
<path d="M495.0 927.0 L490.3 927.5 L487.8 922.9 L486.7 918.2 L486.5 913.3 L490.2 910.7 L493.1 908.2 L496.1 911.6 L501.1 908.9 L500.5 914.5 L505.0 918.4 L501.9 922.5 L498.0 923.5 Z" fill="#6f846a"/>
<path d="M613.0 1046.8 L611.7 1052.5 L608.4 1056.5 L606.8 1052.6 L605.7 1051.3 L602.9 1051.0 L603.5 1046.1 L606.2 1041.4 L608.8 1038.9 L611.8 1034.1 L612.2 1039.2 L614.5 1039.0 L615.2 1042.2 Z" fill="#6f846a"/>
<path d="M614.6 1121.1 L612.5 1113.8 L614.0 1110.8 L615.8 1110.7 L617.3 1110.7 L619.4 1108.0 L621.8 1115.5 L622.3 1121.6 L621.7 1124.5 L623.0 1130.9 L621.9 1133.8 L619.3 1129.8 L617.3 1125.2 Z" fill="#6f846a"/>
<path d="M204.6 818.5 L206.7 799.8 L208.3 790.4 L206.0 781.8 L210.9 770.8 L218.6 758.4 L225.8 765.4 L238.2 757.0 L241.9 768.1 L237.9 782.5 L230.1 792.5 L227.7 812.2 L217.2 806.5 Z" fill="#6f846a"/>
<path d="M247.3 792.4 L246.3 787.3 L241.3 781.2 L254.0 773.5 L261.8 760.0 L271.8 761.8 L275.2 766.8 L278.6 769.9 L280.9 775.0 L278.6 784.0 L269.9 795.7 L259.2 792.1 L250.1 796.9 Z" fill="#6f846a"/>
<path d="M370.2 786.3 L356.5 787.5 L350.4 789.6 L345.3 789.8 L337.4 791.2 L329.8 786.2 L335.9 771.5 L346.9 759.3 L358.7 746.0 L370.4 743.3 L370.2 756.9 L369.8 764.9 L378.5 771.0 Z" fill="#6f846a"/>
<path d="M295.2 828.6 L287.6 828.7 L289.5 822.4 L291.3 817.3 L295.2 813.8 L300.0 813.7 L303.3 815.8 L307.9 816.0 L310.3 820.1 L315.0 826.6 L305.5 828.2 L303.9 838.0 L297.9 831.6 Z" fill="#6f846a"/>
<path d="M282.5 853.8 L275.3 855.7 L269.7 850.6 L268.5 844.7 L262.9 841.7 L264.4 836.2 L263.7 827.7 L272.6 830.9 L277.5 829.1 L285.7 827.5 L282.2 837.1 L286.5 841.2 L288.0 848.6 Z" fill="#6f846a"/>
<path d="M225.8 839.7 L224.1 837.2 L223.6 834.2 L219.0 827.4 L226.3 827.9 L230.1 823.0 L236.2 823.3 L237.2 830.1 L238.1 834.0 L242.8 839.9 L237.2 843.2 L231.9 842.9 L227.1 846.4 Z" fill="#6f846a"/>
<path d="M289.7 875.0 L284.9 873.1 L280.4 879.1 L273.1 874.7 L270.7 866.2 L266.3 857.9 L276.0 858.5 L277.4 854.6 L281.4 852.3 L288.7 851.7 L294.9 859.1 L293.1 866.9 L291.7 871.5 Z" fill="#6f846a"/>
<path d="M364.6 842.2 L354.5 846.6 L353.1 841.0 L342.1 842.1 L342.9 837.4 L346.5 832.3 L355.1 827.9 L364.7 826.1 L370.8 827.6 L375.3 828.9 L377.6 831.5 L380.9 835.1 L368.9 837.7 Z" fill="#6f846a"/>
<path d="M437.5 841.7 L429.0 838.8 L423.5 836.4 L418.9 834.0 L411.2 831.4 L408.7 826.7 L399.3 818.6 L402.7 816.0 L408.1 815.1 L418.5 823.3 L423.5 827.3 L427.5 830.9 L434.5 836.2 Z" fill="#6f846a"/>
<path d="M434.3 852.6 L430.5 848.3 L426.0 844.2 L423.2 839.5 L425.3 836.9 L430.4 836.4 L437.7 838.5 L444.6 843.8 L445.1 848.4 L454.1 854.6 L447.7 854.6 L446.5 857.6 L440.2 855.0 Z" fill="#6f846a"/>
<path d="M362.9 871.1 L361.4 869.3 L361.5 866.2 L363.4 863.0 L364.2 856.7 L368.7 856.0 L371.5 857.5 L373.9 858.7 L378.4 860.1 L374.3 865.7 L370.8 868.7 L368.4 874.5 L364.1 874.9 Z" fill="#6f846a"/>
<path d="M315.8 790.7 L313.5 784.2 L313.0 775.5 L315.9 771.5 L319.8 771.1 L321.9 783.3 L324.5 786.2 L324.6 791.8 L324.7 796.8 L326.3 808.5 L321.9 805.8 L318.1 807.2 L316.2 797.0 Z" fill="#6f846a"/>
<path d="M252.4 680.6 L251.2 675.8 L247.3 669.0 L247.9 663.6 L254.7 669.9 L257.2 667.3 L261.5 671.3 L262.7 677.1 L264.9 681.7 L263.2 683.8 L261.9 685.9 L259.3 686.1 L255.6 686.0 Z" fill="#6f846a"/>
<path d="M232.1 679.6 L231.3 676.8 L229.1 675.4 L227.9 671.1 L231.9 668.4 L234.1 665.3 L236.7 665.2 L241.2 662.1 L241.9 666.9 L239.4 671.8 L238.6 674.8 L237.4 679.1 L234.3 682.2 Z" fill="#6f846a"/>
<path d="M458.6 826.5 L454.6 824.9 L447.4 822.3 L448.9 819.2 L451.5 817.5 L454.7 816.4 L459.0 813.3 L464.1 818.5 L469.9 820.8 L470.4 824.2 L470.7 827.1 L470.9 831.3 L465.0 832.5 Z" fill="#6f846a"/>
<path d="M456.9 790.9 L454.9 796.0 L450.8 789.5 L448.9 785.4 L441.6 781.6 L444.3 776.9 L443.5 770.0 L448.8 771.8 L452.6 768.7 L456.5 775.6 L457.8 781.0 L457.9 784.6 L461.0 791.1 Z" fill="#6f846a"/>
<path d="M421.7 860.4 L425.2 844.1 L420.8 843.2 L424.9 832.3 L428.1 822.4 L432.8 819.8 L436.8 814.9 L441.4 812.1 L446.0 813.4 L438.4 828.8 L438.0 837.4 L433.7 849.9 L427.1 859.7 Z" fill="#6f846a"/>
<path d="M429.1 854.5 L433.1 862.0 L426.1 861.1 L418.4 854.7 L415.4 849.9 L404.7 844.9 L408.6 842.4 L405.4 836.3 L412.7 838.0 L418.9 838.8 L423.9 845.7 L432.5 849.3 L430.2 852.6 Z" fill="#6f846a"/>
<path d="M447.0 867.0 L439.7 868.4 L437.6 863.7 L434.9 862.0 L432.7 859.5 L433.8 855.6 L438.8 852.8 L443.8 852.5 L448.3 851.5 L455.5 850.2 L459.4 853.4 L450.7 858.2 L451.8 862.4 Z" fill="#6f846a"/>
<path d="M411.6 874.5 L405.6 875.9 L410.4 870.4 L409.7 866.3 L413.4 862.9 L417.5 860.4 L420.0 862.6 L422.6 863.6 L424.2 866.4 L422.0 870.7 L420.1 875.2 L415.9 877.0 L412.3 877.9 Z" fill="#6f846a"/>
<path d="M462.0 903.3 L459.0 907.7 L453.5 909.2 L449.3 914.5 L442.1 913.4 L438.9 908.1 L439.2 903.5 L436.6 899.2 L442.3 897.3 L445.7 895.6 L450.4 893.1 L453.5 897.1 L459.2 898.7 Z" fill="#6f846a"/>
<path d="M495.3 918.0 L490.2 921.7 L489.7 915.7 L483.3 913.6 L483.4 907.8 L488.0 904.4 L493.2 905.5 L497.0 901.8 L500.7 904.7 L507.5 906.3 L502.1 912.2 L505.9 918.5 L502.0 923.8 Z" fill="#6f846a"/>
<path d="M389.2 774.6 L388.9 769.0 L382.0 765.1 L386.1 762.0 L386.4 756.6 L391.9 755.8 L396.4 761.7 L402.3 761.5 L406.3 766.1 L400.6 769.2 L401.3 772.8 L399.7 777.0 L394.6 772.9 Z" fill="#6f846a"/>
<path d="M444.5 785.7 L439.9 783.1 L446.3 780.0 L447.5 776.0 L452.0 771.7 L455.3 776.2 L458.3 777.4 L461.4 779.5 L459.4 783.2 L455.8 785.2 L453.4 787.6 L450.1 788.0 L443.1 791.6 Z" fill="#6f846a"/>
<path d="M200.0 767.5 L215.0 763.8 L232.5 770.0 L250.0 762.5 L270.0 760.0 L282.5 767.5 L280.0 780.0 L262.5 790.0 L245.0 800.0 L225.0 797.5 L210.0 802.5 L200.0 797.5 L195.0 797.5 L195.0 767.5 Z" fill="#6f846a"/>
<path d="M297.8 719.7 L293.5 714.7 L301.9 708.9 L313.5 709.2 L319.6 711.9 L323.4 715.1 L321.5 719.5 L318.3 726.3 L307.2 724.2 L293.7 727.0 Z" fill="#7b7b7b"/>
<path d="M322.4 740.3 L317.3 740.5 L313.2 737.3 L311.1 732.4 L313.1 727.4 L317.9 725.8 L323.0 723.6 L325.4 728.7 L329.2 732.6 L327.6 738.2 Z" fill="#7b7b7b"/>
<path d="M408.1 790.1 L401.2 786.2 L404.2 773.9 L416.8 766.2 L425.4 763.8 L434.0 762.7 L440.7 767.9 L428.8 779.5 L422.2 785.2 L413.7 793.4 Z" fill="#7b7b7b"/>
<path d="M411.3 803.8 L408.8 798.8 L404.3 794.1 L410.1 790.8 L412.8 785.8 L417.2 789.7 L419.6 792.2 L420.9 795.5 L419.2 798.6 L416.8 802.8 Z" fill="#7b7b7b"/>
<path d="M253.2 803.7 L249.9 805.6 L250.1 799.4 L251.1 795.4 L252.4 792.3 L254.6 788.2 L257.6 789.4 L256.8 795.9 L256.1 799.4 L255.8 805.5 Z" fill="#7b7b7b"/>
<path d="M229.5 706.2 L224.4 706.4 L220.1 706.2 L217.7 702.5 L214.5 698.6 L217.4 695.5 L220.8 694.4 L225.3 692.7 L226.4 698.0 L230.1 701.3 Z" fill="#7b7b7b"/>
<path d="M390.1 905.5 L384.8 907.2 L379.2 909.4 L371.4 905.1 L362.8 903.2 L362.1 899.9 L361.4 895.9 L370.7 895.3 L380.6 898.3 L384.4 902.0 Z" fill="#7b7b7b"/>
<path d="M342.4 807.3 L339.9 809.6 L337.6 809.1 L336.2 807.6 L334.4 805.4 L336.8 802.0 L340.1 800.9 L344.1 798.3 L343.9 802.4 L345.0 804.6 Z" fill="#7b7b7b"/>
<path d="M501.3 957.6 L495.4 962.1 L485.6 957.7 L476.6 956.3 L470.3 949.2 L475.1 944.3 L478.9 941.0 L485.7 940.2 L495.5 942.4 L495.2 950.0 Z" fill="#7b7b7b"/>
<path d="M506.9 932.5 L505.1 928.7 L504.6 923.8 L506.5 917.5 L511.5 917.6 L516.6 913.9 L517.2 919.6 L518.9 924.2 L516.1 930.4 L511.2 930.3 Z" fill="#7b7b7b"/>
<path d="M459.0 991.0 L462.7 985.8 L466.1 982.9 L469.3 980.7 L475.6 976.3 L474.4 981.6 L479.3 983.0 L473.0 986.6 L469.5 991.1 L466.0 989.2 Z" fill="#7b7b7b"/>
<path d="M627.8 1018.0 L619.2 1017.5 L613.7 1018.8 L603.7 1017.3 L599.6 1009.3 L598.5 1001.7 L604.2 996.8 L614.2 1003.9 L620.5 1005.9 L629.0 1011.4 Z" fill="#7b7b7b"/>
<path d="M625.1 1055.4 L617.3 1052.5 L617.4 1046.8 L618.1 1041.6 L625.3 1042.5 L630.9 1044.7 L642.4 1046.7 L639.4 1053.4 L641.1 1061.1 L630.8 1057.6 Z" fill="#7b7b7b"/>
<path d="M631.1 1104.1 L620.1 1105.5 L615.9 1100.6 L608.6 1095.5 L620.9 1091.6 L629.1 1085.1 L641.1 1087.3 L643.9 1092.9 L647.6 1097.6 L642.9 1103.4 Z" fill="#7b7b7b"/>
<path d="M564.7 1049.7 L565.2 1046.9 L565.0 1042.7 L569.6 1041.2 L573.6 1042.4 L574.3 1045.8 L574.0 1048.4 L572.6 1050.8 L569.7 1051.2 L567.4 1050.8 Z" fill="#7b7b7b"/>
<path d="M581.7 973.5 L578.6 972.9 L577.1 968.4 L578.1 964.5 L577.7 958.8 L580.9 957.2 L584.1 959.2 L586.1 963.2 L586.8 968.6 L585.6 974.5 Z" fill="#7b7b7b"/>
<path d="M460.0 1117.0 L461.1 1113.2 L463.3 1110.3 L466.5 1108.1 L471.6 1105.9 L472.6 1109.8 L472.9 1112.8 L471.0 1115.9 L467.4 1116.9 L462.3 1120.2 Z" fill="#7b7b7b"/>
<path d="M543.3 1117.8 L543.0 1120.9 L536.7 1120.8 L531.9 1121.7 L528.7 1119.7 L528.1 1117.6 L529.6 1115.7 L532.9 1114.9 L537.8 1113.0 L542.5 1115.0 Z" fill="#7b7b7b"/>
<path d="M565.9 1126.3 L562.5 1122.0 L565.5 1119.2 L568.1 1116.2 L572.3 1118.2 L574.4 1122.6 L578.1 1127.8 L572.8 1128.7 L571.3 1133.7 L566.5 1132.5 Z" fill="#7b7b7b"/>
<path d="M625.9 1144.0 L618.0 1144.4 L618.0 1140.2 L615.2 1137.4 L618.6 1134.2 L625.5 1134.1 L632.2 1133.8 L634.4 1136.9 L635.4 1139.8 L632.2 1142.8 Z" fill="#7b7b7b"/>
<path d="M408.7 1064.0 L405.2 1062.4 L404.9 1058.4 L407.5 1055.9 L409.9 1053.0 L413.2 1054.8 L417.8 1055.8 L416.8 1060.2 L416.0 1064.2 L412.0 1065.3 Z" fill="#7b7b7b"/>
<path d="M467.6 1040.0 L465.2 1039.3 L461.2 1038.9 L462.0 1035.1 L463.5 1032.3 L466.3 1031.0 L469.9 1030.6 L470.7 1034.2 L470.8 1036.7 L471.3 1040.4 Z" fill="#7b7b7b"/>
<path d="M645.6 1154.5 L639.8 1155.0 L635.2 1152.2 L634.5 1147.5 L640.6 1145.4 L643.3 1142.6 L648.9 1141.0 L653.0 1144.0 L650.1 1148.3 L648.5 1150.9 Z" fill="#7b7b7b"/>
<path d="M408.7 790.1 L406.6 792.5 L401.7 793.0 L398.0 788.0 L396.5 783.3 L399.3 781.3 L401.3 778.7 L406.5 777.5 L410.7 783.1 L411.4 788.0 Z" fill="#7b7b7b"/>
<path d="M423.0 793.2 L416.9 789.9 L415.1 778.5 L411.1 769.6 L414.5 762.9 L418.1 757.9 L422.7 763.0 L426.6 768.6 L427.6 777.4 L426.2 785.2 Z" fill="#7b7b7b"/>
<path d="M452.3 816.2 L452.4 819.3 L449.2 819.3 L446.9 819.6 L443.5 819.1 L444.1 815.8 L444.9 813.2 L447.3 812.0 L450.5 810.2 L451.3 814.1 Z" fill="#7b7b7b"/>
<path d="M450.9 852.2 L448.4 848.1 L445.7 845.3 L445.0 841.5 L449.6 840.5 L454.5 842.0 L456.9 844.8 L460.4 847.4 L459.0 849.9 L456.6 852.5 Z" fill="#7b7b7b"/>
<path d="M498.0 896.6 L494.8 898.9 L490.8 898.9 L490.2 895.2 L490.1 892.2 L491.7 888.9 L495.2 886.0 L497.7 889.2 L502.2 889.8 L501.1 894.0 Z" fill="#7b7b7b"/>
<path d="M524.6 922.0 L520.4 920.5 L517.8 917.3 L513.3 914.3 L515.2 910.1 L517.1 906.7 L521.0 906.7 L525.8 907.9 L528.0 913.7 L524.7 916.9 Z" fill="#7b7b7b"/>
<path d="M600.6 1000.0 L617.5 992.5 L632.5 1000.0 L640.0 1022.5 L638.1 1045.0 L643.8 1067.5 L649.4 1086.3 L651.3 1101.3 L647.5 1114.4 L636.3 1116.3 L621.3 1105.0 L621.3 1086.3 L625.9 1067.5 L619.4 1052.5 L610.0 1060.0 L605.3 1067.5 L608.1 1052.5 L613.8 1045.0 L621.3 1035.6 L625.0 1028.1 L617.5 1018.8 L602.5 1015.0 Z" fill="#7b7b7b"/>
<path d="M568.8 968.1 L581.9 960.6 L595.0 970.0 L608.1 973.8 L613.8 985.0 L602.5 988.8 L591.3 985.0 L576.3 981.3 L566.9 977.5 Z" fill="#7b7b7b"/>
<polygon points="237.5,655.0 238.8,680.0 237.5,700.0 238.5,707.5 237.0,712.0 230.0,716.0 215.0,722.0 196.0,726.0 196.0,786.0 203.5,780.0 207.2,770.0 209.8,762.5 217.2,753.0 233.5,750.0 237.9,743.0 237.2,737.5 238.5,725.0 242.0,720.0 246.0,715.0 248.5,707.5 248.5,700.0 250.0,680.0 253.8,655.0" fill="#5d747b"/>
<path d="M257.5 857.5 C259.2 859.6 264.6 864.6 267.5 870.0 C270.4 875.4 271.2 885.4 275.0 890.0 C278.8 894.6 285.0 896.2 290.0 897.5 C295.0 898.8 300.8 895.4 305.0 897.5 C309.2 899.6 312.9 906.7 315.0 910.0 C317.1 913.3 317.1 916.2 317.5 917.5" fill="none" stroke="#657b82" stroke-width="1.4"/>
<path d="M400.0 1120.0 C401.1 1122.3 404.1 1128.6 406.3 1134.0 C408.5 1139.4 411.0 1146.2 413.3 1152.7 C415.7 1159.2 419.2 1169.6 420.3 1173.0" fill="none" stroke="#657b82" stroke-width="1.8"/>
<path d="M642.0 1115.3 C638.1 1114.9 625.7 1113.8 618.7 1113.0 C611.7 1112.2 604.7 1109.9 600.0 1110.7 C595.3 1111.4 592.6 1114.2 590.7 1117.7 C588.7 1121.2 590.7 1127.8 588.3 1131.7 C586.0 1135.6 581.7 1137.9 576.7 1141.0 C571.6 1144.1 564.2 1148.0 558.0 1150.3 C551.8 1152.7 544.4 1152.7 539.3 1155.0 C534.3 1157.3 530.4 1161.3 527.7 1164.3 C524.9 1167.3 523.8 1171.5 523.0 1173.0" fill="none" stroke="#657b82" stroke-width="1.5"/>
<path d="M583.7 1141.0 C584.4 1142.9 586.4 1149.2 588.3 1152.7 C590.3 1156.2 593.8 1158.6 595.3 1162.0 C596.9 1165.4 597.3 1171.1 597.7 1173.0" fill="none" stroke="#657b82" stroke-width="1.3"/>
<path d="M200.0 825.0 C204.2 823.3 216.7 819.6 225.0 815.0 C233.3 810.4 240.8 800.4 250.0 797.5 C259.2 794.6 270.8 802.1 280.0 797.5 C289.2 792.9 298.3 782.1 305.0 770.0 C311.7 757.9 317.5 732.5 320.0 725.0" fill="none" stroke="#6f6f73" stroke-width="0.9" opacity="0.85"/>
<path d="M280.0 797.5 C281.7 802.1 285.8 814.2 290.0 825.0 C294.2 835.8 295.0 856.2 305.0 862.5 C315.0 868.8 338.3 866.2 350.0 862.5 C361.7 858.8 368.3 848.8 375.0 840.0 C381.7 831.2 384.6 819.2 390.0 810.0 C395.4 800.8 404.6 789.2 407.5 785.0" fill="none" stroke="#6f6f73" stroke-width="0.9" opacity="0.85"/>
<path d="M320.0 725.0 C325.0 728.3 339.2 737.9 350.0 745.0 C360.8 752.1 375.4 760.8 385.0 767.5 C394.6 774.2 400.8 779.6 407.5 785.0 C414.2 790.4 417.9 795.4 425.0 800.0 C432.1 804.6 445.8 810.4 450.0 812.5" fill="none" stroke="#6f6f73" stroke-width="0.9" opacity="0.85"/>
<path d="M200.0 885.0 C205.0 885.0 219.6 886.7 230.0 885.0 C240.4 883.3 250.0 878.8 262.5 875.0 C275.0 871.2 297.9 864.6 305.0 862.5" fill="none" stroke="#6f6f73" stroke-width="0.9" opacity="0.85"/>
<path d="M230.0 885.0 L232.5 916.2" fill="none" stroke="#6f6f73" stroke-width="0.9" opacity="0.85"/>
<path d="M345.0 870.0 L346.2 916.2" fill="none" stroke="#6f6f73" stroke-width="0.9" opacity="0.85"/>
<path d="M407.5 785.0 C407.1 789.2 405.0 799.6 405.0 810.0 C405.0 820.4 404.2 837.5 407.5 847.5 C410.8 857.5 417.9 864.2 425.0 870.0 C432.1 875.8 441.7 875.8 450.0 882.5 C458.3 889.2 469.2 902.1 475.0 910.0 C480.8 917.9 483.3 926.7 485.0 930.0" fill="none" stroke="#6f6f73" stroke-width="0.9" opacity="0.85"/>
<path d="M282.5 661.0 C286.2 665.8 298.8 679.3 305.0 690.0 C311.2 700.7 317.5 719.2 320.0 725.0" fill="none" stroke="#6f6f73" stroke-width="0.9" opacity="0.85"/>
<path d="M225.0 661.0 C225.8 665.4 227.9 676.8 230.0 687.5 C232.1 698.2 236.2 718.8 237.5 725.0" fill="none" stroke="#6f6f73" stroke-width="0.9" opacity="0.85"/>
<path d="M237.5 725.0 C243.8 724.6 262.9 722.9 275.0 722.5 C287.1 722.1 304.2 722.5 310.0 722.5" fill="none" stroke="#6f6f73" stroke-width="0.9" opacity="0.85"/>
<path d="M385.0 810.0 C385.4 816.7 387.5 835.0 387.5 850.0 C387.5 865.0 385.4 891.7 385.0 900.0" fill="none" stroke="#6f6f73" stroke-width="0.9" opacity="0.85"/>
<path d="M350.0 800.0 C354.2 801.7 366.7 809.2 375.0 810.0 C383.3 810.8 395.8 805.8 400.0 805.0" fill="none" stroke="#6f6f73" stroke-width="0.9" opacity="0.85"/>
<path d="M390.0 769.3 C392.3 772.4 400.5 782.2 404.0 788.0 C407.5 793.8 410.6 795.4 411.0 804.3 C411.4 813.3 405.2 832.3 406.3 841.7 C407.5 851.0 412.9 854.9 418.0 860.3 C423.1 865.8 429.7 868.5 436.7 874.3 C443.7 880.2 453.4 889.1 460.0 895.3 C466.6 901.6 472.4 906.7 476.3 911.7 C480.2 916.6 482.2 922.7 483.3 925.0" fill="none" stroke="#6f6f73" stroke-width="0.9" opacity="0.85"/>
<path d="M404.0 788.0 C407.1 789.9 415.7 795.0 422.7 799.7 C429.7 804.3 442.1 813.3 446.0 816.0" fill="none" stroke="#6f6f73" stroke-width="0.9" opacity="0.85"/>
<path d="M453.0 837.0 C451.8 840.1 446.4 848.7 446.0 855.7 C445.6 862.7 452.2 875.9 450.7 879.0 C449.1 882.1 439.0 875.1 436.7 874.3" fill="none" stroke="#6f6f73" stroke-width="0.9" opacity="0.85"/>
<path d="M390.0 897.7 C393.1 896.1 401.7 891.4 408.7 888.3 C415.7 885.2 428.1 880.6 432.0 879.0" fill="none" stroke="#6f6f73" stroke-width="0.9" opacity="0.85"/>
<path d="M432.0 879.0 C430.8 883.7 425.8 899.3 425.0 907.0 C424.2 914.7 426.9 922.0 427.3 925.0" fill="none" stroke="#6f6f73" stroke-width="0.9" opacity="0.85"/>
<path d="M483.3 910.0 C483.7 913.9 485.7 926.3 485.7 933.3 C485.7 940.3 486.4 945.8 483.3 952.0 C480.2 958.2 473.6 962.9 467.0 970.7 C460.4 978.4 450.7 989.3 443.7 998.7 C436.7 1008.0 430.1 1019.7 425.0 1026.7 C419.9 1033.7 415.3 1038.3 413.3 1040.7" fill="none" stroke="#6f6f73" stroke-width="0.9" opacity="0.85"/>
<path d="M483.3 952.0 C486.1 954.3 493.4 962.5 499.7 966.0 C505.9 969.5 512.5 971.1 520.7 973.0 C528.8 974.9 540.1 976.5 548.7 977.7 C557.2 978.8 564.2 977.7 572.0 980.0 C579.8 982.3 588.3 987.8 595.3 991.7 C602.3 995.6 609.3 998.7 614.0 1003.3 C618.7 1008.0 620.2 1013.4 623.3 1019.7 C626.4 1025.9 629.9 1031.7 632.7 1040.7 C635.4 1049.6 640.1 1064.0 639.7 1073.3 C639.3 1082.7 633.4 1090.1 630.3 1096.7 C627.2 1103.3 622.6 1110.3 621.0 1113.0" fill="none" stroke="#6f6f73" stroke-width="0.9" opacity="0.85"/>
<path d="M400.0 933.3 C406.1 934.1 425.5 935.7 436.7 938.0 C447.8 940.3 459.2 945.0 467.0 947.3 C474.8 949.7 480.6 951.2 483.3 952.0" fill="none" stroke="#6f6f73" stroke-width="0.9" opacity="0.85"/>
<path d="M429.7 1043.0 C436.3 1042.6 457.7 1041.4 469.3 1040.7 C481.0 1039.9 489.6 1039.9 499.7 1038.3 C509.8 1036.8 521.1 1034.4 530.0 1031.3 C538.9 1028.2 544.8 1022.2 553.3 1019.7 C561.9 1017.1 571.2 1017.3 581.3 1016.2 C591.4 1015.0 608.6 1013.2 614.0 1012.7" fill="none" stroke="#6f6f73" stroke-width="0.9" opacity="0.85"/>
<path d="M499.7 1038.3 C503.2 1039.5 515.2 1041.4 520.7 1045.3 C526.1 1049.2 531.2 1053.9 532.3 1061.7 C533.5 1069.4 527.3 1082.7 527.7 1092.0 C528.1 1101.3 533.5 1113.4 534.7 1117.7" fill="none" stroke="#6f6f73" stroke-width="0.9" opacity="0.85"/>
<path d="M534.7 1117.7 C538.6 1116.1 549.8 1111.1 558.0 1108.3 C566.2 1105.6 575.5 1103.7 583.7 1101.3 C591.8 1099.0 600.4 1097.4 607.0 1094.3 C613.6 1091.2 620.6 1084.6 623.3 1082.7" fill="none" stroke="#6f6f73" stroke-width="0.9" opacity="0.85"/>
<path d="M534.7 1117.7 C531.6 1120.4 521.4 1127.8 516.0 1134.0 C510.6 1140.2 505.1 1148.5 502.0 1155.0 C498.9 1161.5 498.1 1170.0 497.3 1173.0" fill="none" stroke="#6f6f73" stroke-width="0.9" opacity="0.85"/>
<path d="M562.7 989.3 C562.7 994.8 561.5 1012.3 562.7 1022.0 C563.8 1031.7 570.4 1036.8 569.7 1047.7 C568.9 1058.6 560.7 1077.2 558.0 1087.3 C555.3 1097.4 554.1 1104.8 553.3 1108.3" fill="none" stroke="#6f6f73" stroke-width="0.9" opacity="0.85"/>
<path d="M569.7 1047.7 C573.2 1051.2 583.3 1063.6 590.7 1068.7 C598.1 1073.7 606.2 1074.9 614.0 1078.0 C621.8 1081.1 633.4 1085.8 637.3 1087.3" fill="none" stroke="#6f6f73" stroke-width="0.9" opacity="0.85"/>
<path d="M569.7 1047.7 C572.8 1045.7 581.7 1039.5 588.3 1036.0 C594.9 1032.5 605.8 1028.2 609.3 1026.7" fill="none" stroke="#6f6f73" stroke-width="0.9" opacity="0.85"/>
<path d="M469.3 970.7 C469.7 976.9 471.7 996.3 471.7 1008.0 C471.7 1019.7 468.2 1030.6 469.3 1040.7 C470.5 1050.8 480.2 1060.1 478.7 1068.7 C477.1 1077.2 463.1 1088.1 460.0 1092.0" fill="none" stroke="#6f6f73" stroke-width="0.9" opacity="0.85"/>
<path d="M497.3 966.0 C498.9 969.9 501.2 981.6 506.7 989.3 C512.1 997.1 522.2 1005.7 530.0 1012.7 C537.8 1019.7 546.7 1025.5 553.3 1031.3 C559.9 1037.2 566.9 1044.9 569.7 1047.7" fill="none" stroke="#6f6f73" stroke-width="0.9" opacity="0.85"/>
<path d="M404.0 968.3 C405.6 971.4 407.9 980.4 413.3 987.0 C418.8 993.6 431.6 1006.1 436.7 1008.0 C441.7 1009.9 442.5 1000.2 443.7 998.7" fill="none" stroke="#6f6f73" stroke-width="0.9" opacity="0.85"/>
<path d="M404.0 1054.7 C404.8 1061.7 405.9 1083.4 408.7 1096.7 C411.4 1109.9 416.4 1121.3 420.3 1134.0 C424.2 1146.7 430.1 1166.5 432.0 1173.0" fill="none" stroke="#6f6f73" stroke-width="0.9" opacity="0.85"/>
<path d="M448.3 1110.7 C451.4 1111.1 459.2 1111.8 467.0 1113.0 C474.8 1114.2 483.7 1116.9 495.0 1117.7 C506.3 1118.4 528.1 1117.7 534.7 1117.7" fill="none" stroke="#6f6f73" stroke-width="0.9" opacity="0.85"/>
<path d="M623.3 1082.7 C625.3 1086.2 632.7 1095.1 635.0 1103.7 C637.3 1112.2 636.2 1122.4 637.3 1134.0 C638.5 1145.5 641.2 1166.5 642.0 1173.0" fill="none" stroke="#6f6f73" stroke-width="0.9" opacity="0.85"/>
<path d="M460.0 1173.0 C460.4 1168.8 464.3 1158.4 462.3 1148.0 C460.4 1137.6 450.7 1116.9 448.3 1110.7" fill="none" stroke="#6f6f73" stroke-width="0.9" opacity="0.85"/>
<path d="M555.7 956.7 C554.5 960.2 552.2 970.7 548.7 977.7 C545.2 984.7 540.1 991.7 534.7 998.7 C529.2 1005.7 521.8 1017.3 516.0 1019.7 C510.2 1022.0 503.2 1010.7 499.7 1012.7 C496.2 1014.6 495.4 1023.6 495.0 1031.3 C494.6 1039.1 497.7 1052.3 497.3 1059.3 C496.9 1066.3 493.1 1068.7 492.7 1073.3 C492.3 1078.0 497.3 1083.8 495.0 1087.3 C492.7 1090.8 479.4 1090.4 478.7 1094.3 C477.9 1098.2 487.6 1105.6 490.3 1110.7 C493.1 1115.7 495.4 1119.2 495.0 1124.7 C494.6 1130.1 485.3 1141.8 488.0 1143.3 C490.7 1144.9 505.1 1132.4 511.3 1134.0 C517.6 1135.6 518.3 1149.9 525.3 1152.7 C532.3 1155.4 544.8 1152.3 553.3 1150.3 C561.9 1148.4 572.0 1137.2 576.7 1141.0 C581.3 1144.8 580.6 1167.6 581.3 1173.0" fill="none" stroke="#6a5670" stroke-width="1" stroke-dasharray="3 2 1 2" opacity=".8"/>
<path d="M232.5 750.0 C235.4 749.4 245.0 746.2 250.0 746.2 C255.0 746.2 257.1 750.2 262.5 750.0 C267.9 749.8 275.4 747.5 282.5 745.0 C289.6 742.5 299.0 738.3 305.0 735.0 C311.0 731.7 316.5 726.7 318.8 725.0" fill="none" stroke="#4a4a4a" stroke-width="0.9"/>
<path d="M200.0 730.0 C202.5 729.2 208.8 725.8 215.0 725.0 C221.2 724.2 232.9 722.1 237.5 725.0 C242.1 727.9 238.3 738.1 242.5 742.5 C246.7 746.9 257.5 749.2 262.5 751.2 C267.5 753.3 268.8 755.2 272.5 755.0 C276.2 754.8 280.8 751.0 285.0 750.0 C289.2 749.0 293.3 747.9 297.5 748.8 C301.7 749.6 305.6 753.1 310.0 755.0 C314.4 756.9 321.5 759.2 323.8 760.0" fill="none" stroke="#ad8b58" stroke-width="1.6"/>
<path d="M320.0 723.8 C317.9 726.0 311.2 733.1 307.5 737.5 C303.8 741.9 299.2 747.9 297.5 750.0" fill="none" stroke="#ad8b58" stroke-width="1.6"/>
<path d="M320.0 723.8 C320.8 725.2 324.2 726.5 325.0 732.5 C325.8 738.5 325.0 752.1 325.0 760.0 C325.0 767.9 324.2 773.3 325.0 780.0 C325.8 786.7 327.1 792.9 330.0 800.0 C332.9 807.1 339.6 815.8 342.5 822.5 C345.4 829.2 346.5 834.6 347.5 840.0 C348.5 845.4 348.5 852.5 348.8 855.0" fill="none" stroke="#ad8b58" stroke-width="1.6"/>
<path d="M348.8 855.0 C349.0 858.3 349.2 867.5 350.0 875.0 C350.8 882.5 353.0 893.0 353.8 900.0 C354.5 907.0 354.4 914.2 354.5 917.0" fill="none" stroke="#a9604c" stroke-width="2.2"/>
<path d="M400.0 1031.3 C401.5 1032.1 406.1 1033.3 408.7 1036.0 C411.3 1038.7 413.7 1043.8 415.7 1047.7 C417.6 1051.6 417.2 1053.5 420.3 1059.3 C423.4 1065.2 430.1 1074.9 434.3 1082.7 C438.6 1090.4 442.5 1099.0 446.0 1106.0 C449.5 1113.0 451.4 1119.2 455.3 1124.7 C459.2 1130.1 465.1 1133.2 469.3 1138.7 C473.6 1144.1 477.5 1151.6 481.0 1157.3 C484.5 1163.0 488.8 1170.4 490.3 1173.0" fill="none" stroke="#ad8b58" stroke-width="1.8"/>
<path d="M400.0 1052.3 C401.1 1051.9 404.1 1050.8 406.3 1050.0 C408.5 1049.2 412.2 1048.1 413.3 1047.7" fill="none" stroke="#ad8b58" stroke-width="1.5"/>
<path d="M392.5 750.0 L397.5 732.5 L412.5 730.0 L437.5 727.5 L452.5 732.5 L450.0 750.0 L440.0 756.2 L425.0 758.0 L410.0 759.2 Z" fill="#65757c"/>
<path d="M208.5 741.2 L227.2 728.8 L237.2 728.1 L237.9 743.1 L232.2 750.6 L216.6 753.1 L209.1 761.2 L203.5 770.0 L201.0 758.8 Z" fill="#64767c"/>
<path d="M400.0 730.5h3.5 M422.5 730.5h4.0 M440.0 727.5h4.5 M397.5 737.5h5.5 M412.5 736.2h5.0 M432.5 736.2h6.0 M447.5 735.0h3.0 M402.5 742.5h6.0 M420.0 743.8h4.5 M435.0 742.0h4.0 M392.5 750.0h5.0 M412.5 749.5h5.5 M432.5 748.8h5.5 M405.0 756.2h4.5 M425.0 755.0h5.5 M408.8 733.2h2.0 M415.0 740.0h2.0 M202.2 738.5h6.2 M228.5 730.4h8.8 M224.8 735.4h5.0 M219.8 740.4h6.9 M233.5 742.5h5.0 M219.1 745.4h6.2 M212.9 750.4h3.8 M225.4 749.6h6.2 M207.2 757.5h4.4 M214.8 731.2h1.9 M229.5 726.5h1.5 M408.7 921.7h9.3 M413.3 917.0h4.7 M436.7 920.5h7.0 M439.0 932.2h5.8 M425.0 919.3h2.3 M456.5 914.2h1.9" stroke="#3a76bd" stroke-width="0.9" fill="none"/>
<path d="M419.5 680.2 L417.0 682.7 L412.4 684.0 L406.0 684.5 L403.9 681.5 L403.6 678.9 L405.9 675.8 L412.3 676.4 L417.1 677.6 Z" fill="#80776f" stroke="#6c5b70" stroke-width="1.1"/>
<path d="M469.1 721.5 L468.5 724.3 L461.7 725.4 L454.7 725.0 L452.1 722.6 L454.3 720.7 L454.9 718.1 L461.6 717.9 L468.2 718.8 Z" fill="#80776f" stroke="#6c5b70" stroke-width="1.1"/>
<path d="M460.1 731.5 L458.2 732.9 L456.9 733.9 L455.4 733.4 L453.1 732.8 L454.5 730.8 L455.4 729.7 L457.1 728.1 L458.9 729.5 Z" fill="#80776f" stroke="#6c5b70" stroke-width="1.1"/>
<path d="M443.9 720.3 L444.2 721.8 L442.9 722.6 L441.5 722.0 L441.2 720.8 L440.4 719.6 L441.6 718.7 L442.9 718.2 L444.6 718.6 Z" fill="#80776f" stroke="#6c5b70" stroke-width="1.1"/>
<path d="M559.8 890.2 L559.4 891.4 L558.2 891.3 L557.3 891.3 L556.6 890.7 L557.1 889.9 L557.0 888.5 L558.2 889.0 L559.0 889.4 Z" fill="#80776f" stroke="#6c5b70" stroke-width="1.1"/>
<path d="M418.2 680.5 L416.3 682.6 L413.0 685.4 L407.1 684.1 L403.7 681.9 L404.2 679.2 L408.5 678.1 L412.4 677.1 L419.0 677.3 Z" fill="#80776f" stroke="#6c5b70" stroke-width="1.1"/>
<path d="M409.8 537.5 L408.5 544.7 L404.5 544.9 L401.8 543.7 L400.5 539.6 L398.9 534.3 L401.5 530.4 L404.6 528.9 L407.6 531.8 Z" fill="#80776f" stroke="#6c5b70" stroke-width="1.1"/>
<path d="M416.2 572.5 L413.6 576.6 L410.2 580.8 L406.0 577.3 L400.2 575.6 L401.9 570.0 L406.3 568.3 L409.8 566.5 L414.2 567.9 Z" fill="#80776f" stroke="#6c5b70" stroke-width="1.1"/>
<path d="M411.5 518.8 L411.3 519.8 L410.2 520.1 L409.3 519.9 L408.2 519.4 L408.7 518.3 L409.1 517.2 L410.3 516.8 L411.3 517.7 Z" fill="#80776f" stroke="#6c5b70" stroke-width="1.1"/>
<path d="M406.7 553.8 L406.7 555.0 L404.3 555.2 L401.9 555.4 L401.8 554.1 L401.1 553.3 L402.1 552.3 L404.1 552.7 L406.6 552.5 Z" fill="#80776f" stroke="#6c5b70" stroke-width="1.1"/>
<path d="M400.0 527.0 C401.2 527.5 404.8 527.4 407.5 530.0 C410.2 532.6 413.8 538.3 416.2 542.5 C418.7 546.7 421.4 550.4 422.0 555.0 C422.6 559.6 421.6 565.4 420.0 570.0 C418.4 574.6 415.0 578.8 412.5 582.5 C410.0 586.2 407.1 590.2 405.0 592.5 C402.9 594.8 400.8 595.6 400.0 596.2" fill="none" stroke="#3f4fb0" stroke-width="0.8" stroke-dasharray="4 3"/>
<polyline points="375.0,661.0 376.3,662.4 378.7,664.4 380.0,667.5 378.2,669.7 375.3,672.5 373.4,674.9 372.5,677.5 368.4,677.2 366.1,679.5 362.3,678.8 360.0,680.0 357.8,683.5 355.2,684.8 353.5,686.5 350.0,690.0 348.3,692.0 344.2,694.2 342.1,698.2 340.0,700.0 335.5,701.4 332.8,702.2 328.9,702.8 325.0,705.0 321.5,706.9 320.4,709.8 317.5,712.5 317.9,715.6 319.1,717.9 320.0,721.2 324.0,720.7 326.1,719.5 330.1,719.2 333.8,717.0 337.7,715.6 340.0,715.5 343.2,716.1 345.9,715.5 349.0,715.9 353.9,715.7 357.5,715.1 360.0,715.5 363.3,716.8 366.0,717.6 368.8,718.8 365.7,721.0 361.2,721.6 356.5,722.9 354.1,724.8 350.0,725.0 347.8,726.2 343.9,728.7 341.2,730.0 343.0,732.4 346.1,734.2 348.7,738.1 352.5,740.0 354.2,742.4 357.3,746.7 360.0,748.8 362.8,749.0 367.6,750.2 372.0,750.5 375.0,750.0 378.3,751.1 382.2,753.3 387.3,753.0 390.0,755.0 392.6,755.1 396.1,756.4 400.2,756.6 402.2,757.7 406.4,758.7 410.0,759.2 414.7,759.4 417.5,758.9 421.6,757.3 425.0,758.0 429.6,758.2 433.3,757.8 436.0,756.5 440.0,756.2 442.5,754.5 445.7,751.1 450.0,750.0 451.0,746.1 453.0,742.7 455.0,740.5 451.8,740.2 452.5,740.6 455.3,742.5 455.2,744.9 455.8,748.8 457.7,750.7 459.7,753.4 460.6,757.3 462.6,760.3 464.7,764.7 467.8,767.7 469.3,768.5 471.7,770.5 473.5,770.0 476.8,770.8 479.8,771.7 482.9,772.5 483.5,775.8 486.8,776.3 488.1,778.5 489.2,782.2 486.3,782.9 483.3,785.7 479.9,788.5 477.1,789.6 472.3,790.6 469.3,792.7 467.4,796.8 467.0,799.7 468.6,803.0 469.7,804.5 471.7,807.8 475.3,810.1 477.5,810.2 478.9,813.8 478.7,816.0 477.8,819.6 475.0,822.3 474.0,825.3 470.6,826.6 466.7,829.5 464.7,832.3 462.2,835.1 461.8,836.9 458.8,839.3 461.0,843.9 461.2,846.3 464.9,848.4 466.0,850.4 469.3,853.3 472.2,852.4 476.6,853.6 480.6,852.4 483.3,852.2 484.3,855.7 484.5,858.0 482.4,860.7 482.2,862.7 485.1,866.2 486.8,868.5 487.6,872.1 490.3,874.3 492.9,877.3 497.2,878.8 498.9,882.3 502.0,883.7 505.3,884.8 506.8,886.6 511.3,889.9 512.4,891.9 516.0,893.0 520.2,895.3 521.9,897.0 525.3,898.8 528.4,897.4 534.1,898.4 537.0,897.7 540.6,899.2 544.0,898.8 544.2,902.4 545.5,903.6 545.2,907.0 542.8,910.0 545.0,911.9 547.7,914.9 551.0,917.0 549.3,920.3 548.7,924.0 547.1,927.6 546.8,929.4 546.3,932.2 548.8,935.8 550.8,938.5 553.3,940.3 554.1,943.5 554.9,945.5 555.7,949.7 558.5,950.1 560.4,952.7 563.7,953.1 567.3,954.3 571.7,955.2 574.7,955.9 579.0,956.7 582.2,955.3 584.4,952.9 588.3,950.8 589.3,953.1 592.0,956.3 593.0,959.0 594.3,962.3 596.2,964.3 596.5,967.2 600.0,968.6 602.9,970.5 606.0,971.6 609.3,973.0 611.3,976.3 613.9,978.5 616.4,979.5 617.5,982.3 619.2,986.4 621.4,987.8 622.2,991.7 625.2,992.3 629.0,992.7 633.8,994.0 634.4,997.5 637.6,1001.1 638.5,1003.3 641.2,1004.6 645.9,1004.1 649.0,1005.7 651.6,1009.6 652.5,1011.5 649.2,1014.4 646.8,1015.4 644.3,1017.3 643.7,1021.6 640.8,1024.3 638.9,1027.1 638.5,1029.8 636.7,1032.7 636.2,1036.0 638.1,1037.9 639.2,1041.7 639.5,1044.4 642.0,1047.7 642.6,1051.2 641.6,1055.7 643.5,1059.2 643.2,1061.7 643.2,1064.1 643.9,1068.1 645.3,1069.6 646.7,1073.3 648.0,1077.2 650.3,1078.6 650.3,1083.0 652.5,1085.0 653.0,1089.3 652.4,1091.8 653.7,1096.7 652.5,1099.6 649.6,1103.9 649.0,1106.0 650.1,1109.4 649.6,1112.2 651.3,1114.2 647.7,1116.1 645.8,1116.1 643.2,1117.7 643.7,1121.7 643.4,1123.1 644.3,1127.0 646.3,1128.4 647.4,1130.1 650.2,1132.8 652.1,1132.8 656.0,1134.0" fill="none" stroke="#6c5b70" stroke-width="1.7" stroke-linejoin="round"/>
<polyline points="237.5,655.0 238.8,680.0 237.5,700.0 238.5,707.5 237.0,712.0 230.0,716.0 215.0,722.0 196.0,726.0" fill="none" stroke="#6c5b70" stroke-width="1.4"/>
<polyline points="253.8,655.0 250.0,680.0 248.5,700.0 248.5,707.5 246.0,715.0 242.0,720.0 238.5,725.0 237.2,737.5 237.9,743.0 233.5,750.0 217.2,753.0 209.8,762.5 207.2,770.0 203.5,780.0 196.0,786.0" fill="none" stroke="#6c5b70" stroke-width="1.4"/>
<path d="M200.0 837.5 C202.5 837.9 210.8 837.9 215.0 840.0 C219.2 842.1 220.8 847.1 225.0 850.0 C229.2 852.9 235.2 855.4 240.0 857.5 C244.8 859.6 250.8 862.5 253.8 862.5 C256.7 862.5 256.9 858.3 257.5 857.5" fill="none" stroke="#6c5b70" stroke-width="1.6"/>
<rect x="200.3" y="708.8" width="38.9" height="16.4" rx="1.5" fill="#a39582" stroke="#8b7a63" stroke-width="0.8"/><text x="219.75" y="720.4" text-anchor="middle" font-family="DejaVu Sans, Liberation Sans, sans-serif" font-size="9.2" fill="#3a2d20">D 787</text>
<rect x="311.5" y="761.5" width="27" height="17" rx="1.5" fill="#a28b83" stroke="#8d6f63" stroke-width="0.8"/><text x="325.0" y="773.4" text-anchor="middle" font-family="DejaVu Sans, Liberation Sans, sans-serif" font-size="9.2" fill="#3a2d20">D 7</text>
<rect x="404" y="1035.5" width="26" height="15.5" rx="1.5" fill="#a39582" stroke="#8b7a63" stroke-width="0.8"/><text x="417.0" y="1046.65" text-anchor="middle" font-family="DejaVu Sans, Liberation Sans, sans-serif" font-size="9.2" fill="#3a2d20">D 6</text>
</g>
<line x1="490.6" y1="781.7" x2="903" y2="701.4" stroke="#1e1e1e" stroke-width="1.05"/>
<line x1="490.6" y1="781.7" x2="903" y2="701.4" stroke="#1b7fe6" stroke-width="2.4" stroke-dasharray="12 21.4" stroke-dashoffset="-14"/>
<line x1="462.6" y1="794.4" x2="490.90000000000003" y2="781.6" stroke="#14cfd2" stroke-width="2.2"/>
<g transform="translate(450.9 799.2) rotate(250.8)"><path d="M0 -13.9 C1.3 -13.9 2 -11.6 2 -9 L2 -4.4 L12.2 -1.9 C13.9 -1.5 13.9 0.9 12.2 0.9 L2 3.3 L1.6 9.0 L5.1 11.3 C6.4 12 6.3 13.6 5 13.5 L1.1 12.9 L0 14.1 L-1.1 12.9 L-5 13.5 C-6.3 13.6 -6.4 12 -5.1 11.3 L-1.6 9.0 L-2 3.3 L-12.2 0.9 C-13.9 0.9 -13.9 -1.5 -12.2 -1.9 L-2 -4.4 L-2 -9 C-2 -11.6 -1.3 -13.9 0 -13.9 Z" fill="#3fcbc5" stroke="#0a0a0a" stroke-width="1.1" stroke-linejoin="round"/></g>
</svg><!-- top buttons U H T -->
<div class="mb" style="left:506px;top:5px">U</div>
<div class="mb" style="left:541px;top:5px">H</div>
<div class="mb" style="left:576px;top:5px">T</div>
<!-- layer switcher -->
<div id="layers"><svg width="30" height="30" viewBox="0 0 30 30"><g transform="translate(15.3 13.3) scale(1.05) translate(-15 -16.5)">
<path d="M17.31 10.03 L23.19 14.67 Q25.5 16.5 23.19 18.33 L17.31 22.97 Q15 24.8 12.69 22.97 L6.81 18.33 Q4.5 16.5 6.81 14.67 L12.69 10.03 Q15 8.2 17.31 10.03 Z" fill="#1f6274" transform="translate(0 3.4)"/>
<path d="M17.31 10.03 L23.19 14.67 Q25.5 16.5 23.19 18.33 L17.31 22.97 Q15 24.8 12.69 22.97 L6.81 18.33 Q4.5 16.5 6.81 14.67 L12.69 10.03 Q15 8.2 17.31 10.03 Z" fill="#f0f7f8" transform="translate(0 2.2)"/>
<path d="M17.31 10.03 L23.19 14.67 Q25.5 16.5 23.19 18.33 L17.31 22.97 Q15 24.8 12.69 22.97 L6.81 18.33 Q4.5 16.5 6.81 14.67 L12.69 10.03 Q15 8.2 17.31 10.03 Z" fill="#52c0cd"/>
<path d="M6.81 14.67 L12.69 10.03 Q15 8.2 17.31 10.03 L22 13.7 C17 11.6 11 12.4 6.2 15.4 Z" fill="#7ad0d9" opacity=".75"/>
</g></svg></div>
<!-- expand/collapse -->
<div class="tgo" style="top:3px"><div class="tgi"><svg width="26" height="30" viewBox="0 0 26 30"><path d="M5 4.8 L17 15 L5 25.2" fill="none" stroke="#ececec" stroke-width="3.6" stroke-linecap="round" stroke-linejoin="round"/></svg></div></div>
<div class="tgo" style="top:43px"><div class="tgi"><svg width="26" height="30" viewBox="0 0 26 30"><path d="M21 4.8 L9 15 L21 25.2" fill="none" stroke="#ececec" stroke-width="3.6" stroke-linecap="round" stroke-linejoin="round"/></svg></div></div>
<!-- settings gear -->
<div class="mb" style="left:668px;top:85px"><svg width="27" height="27" viewBox="0 0 27 27" style="position:absolute;left:0;top:0"><g transform="translate(13.4 13.35)" fill="none" stroke="#f4f4f4" stroke-width="1.15" stroke-linejoin="round">
<path d="M0.00 -9.15 L0.36 -9.13 L0.71 -9.08 L1.06 -8.94 L1.36 -8.59 L1.58 -7.94 L1.75 -7.29 L1.95 -6.93 L2.19 -6.75 L2.44 -6.62 L2.70 -6.51 L2.96 -6.41 L3.22 -6.32 L3.52 -6.28 L3.92 -6.40 L4.50 -6.73 L5.11 -7.04 L5.57 -7.07 L5.91 -6.92 L6.21 -6.71 L6.47 -6.47 L6.71 -6.21 L6.92 -5.91 L7.07 -5.57 L7.04 -5.11 L6.73 -4.50 L6.40 -3.92 L6.28 -3.52 L6.32 -3.22 L6.41 -2.96 L6.51 -2.70 L6.62 -2.44 L6.75 -2.19 L6.93 -1.95 L7.29 -1.75 L7.94 -1.58 L8.59 -1.36 L8.94 -1.06 L9.08 -0.71 L9.13 -0.36 L9.15 0.00 L9.13 0.36 L9.08 0.71 L8.94 1.06 L8.59 1.36 L7.94 1.58 L7.29 1.75 L6.93 1.95 L6.75 2.19 L6.62 2.44 L6.51 2.70 L6.41 2.96 L6.32 3.22 L6.28 3.52 L6.40 3.92 L6.73 4.50 L7.04 5.11 L7.07 5.57 L6.92 5.91 L6.71 6.21 L6.47 6.47 L6.21 6.71 L5.91 6.92 L5.57 7.07 L5.11 7.04 L4.50 6.73 L3.92 6.40 L3.52 6.28 L3.22 6.32 L2.96 6.41 L2.70 6.51 L2.44 6.62 L2.19 6.75 L1.95 6.93 L1.75 7.29 L1.58 7.94 L1.36 8.59 L1.06 8.94 L0.71 9.08 L0.36 9.13 L0.00 9.15 L-0.36 9.13 L-0.71 9.08 L-1.06 8.94 L-1.36 8.59 L-1.58 7.94 L-1.75 7.29 L-1.95 6.93 L-2.19 6.75 L-2.44 6.62 L-2.70 6.51 L-2.96 6.41 L-3.22 6.32 L-3.52 6.28 L-3.92 6.40 L-4.50 6.73 L-5.11 7.04 L-5.57 7.07 L-5.91 6.92 L-6.21 6.71 L-6.47 6.47 L-6.71 6.21 L-6.92 5.91 L-7.07 5.57 L-7.04 5.11 L-6.73 4.50 L-6.40 3.92 L-6.28 3.52 L-6.32 3.22 L-6.41 2.96 L-6.51 2.70 L-6.62 2.44 L-6.75 2.19 L-6.93 1.95 L-7.29 1.75 L-7.94 1.58 L-8.59 1.36 L-8.94 1.06 L-9.08 0.71 L-9.13 0.36 L-9.15 0.00 L-9.13 -0.36 L-9.08 -0.71 L-8.94 -1.06 L-8.59 -1.36 L-7.94 -1.58 L-7.29 -1.75 L-6.93 -1.95 L-6.75 -2.19 L-6.62 -2.44 L-6.51 -2.70 L-6.41 -2.96 L-6.32 -3.22 L-6.28 -3.52 L-6.40 -3.92 L-6.73 -4.50 L-7.04 -5.11 L-7.07 -5.57 L-6.92 -5.91 L-6.71 -6.21 L-6.47 -6.47 L-6.21 -6.71 L-5.91 -6.92 L-5.57 -7.07 L-5.11 -7.04 L-4.50 -6.73 L-3.92 -6.40 L-3.52 -6.28 L-3.22 -6.32 L-2.96 -6.41 L-2.70 -6.51 L-2.44 -6.62 L-2.19 -6.75 L-1.95 -6.93 L-1.75 -7.29 L-1.58 -7.94 L-1.36 -8.59 L-1.06 -8.94 L-0.71 -9.08 L-0.36 -9.13 Z"/>
<circle r="3.2"/></g></svg></div>
<div class="mb" style="left:668px;top:119px">L</div>
<div class="mb" style="left:668px;top:150px">O</div>
<div class="mb" style="left:668px;top:181px">K</div>
<div class="mb" style="left:668px;top:221px">V</div>
<div class="mb" style="left:668px;top:252px">M</div>
<div class="mb" style="left:668px;top:292px">P</div>
<div class="mb k" style="left:668px;top:323px">I</div>
<div class="mb" style="left:668px;top:363px">R</div>
<div class="mb k" style="left:668px;top:394px">F</div>
<!-- zoom -->
<svg style="position:absolute;left:635px;top:1515px" width="27" height="57" viewBox="0 0 27 57">
<circle cx="13.4" cy="13.5" r="12.4" fill="#013068"/><path d="M4.6 13.5 H22.2 M13.4 4.7 V22.3" stroke="#fff" stroke-width="3.6"/>
<circle cx="13.4" cy="43.5" r="12.4" fill="#013068"/><path d="M4.6 43.5 H22.2" stroke="#fff" stroke-width="3.6"/>
</svg>
<!-- scale -->
<div id="scale"><div class="in">2 NM</div></div>
<!-- attribution -->
<div id="attr"><span style="color:#6f6f6f">© OpenStreetMap</span> contributors.</div>

</div>
<div id="left">
<div style="position:absolute;left:7px;top:5px;font-size:22px;line-height:26px;color:#d0d0d0">FNY55F7</div>
<div style="position:absolute;left:7px;top:31px;font-family:'DejaVu Sans Mono','Liberation Mono',monospace;font-weight:bold;font-size:14px;line-height:16px;color:#cfcfcf">Hex: 3B9BF1</div>
<svg style="position:absolute;left:158px;top:6px" width="24" height="24" viewBox="0 0 24 24"><circle cx="12" cy="12" r="9.4" fill="none" stroke="#e8be93" stroke-width="1.35"/><path d="M7.6 7.6 L16.4 16.4 M16.4 7.6 L7.6 16.4" stroke="#e8be93" stroke-width="1.2" stroke-linecap="round"/></svg>
<div style="position:absolute;left:0;top:54px;width:181px;height:1px;background:#5fb3c6"></div>
<div id="photo" style="position:absolute;left:7px;top:74px;width:171px;height:113px;background:#8aa9d2;overflow:hidden"><svg width="171" height="113" viewBox="14 28 1164 769" preserveAspectRatio="none" style="position:absolute;left:0;top:0">
<defs><linearGradient id="sky" x1="0" y1="0" x2="0" y2="1"><stop offset="0" stop-color="#88a7d2"/><stop offset="1" stop-color="#91b0d6"/></linearGradient></defs>
<rect x="14" y="28" width="1164" height="769" fill="url(#sky)"/>
<!-- tail fin -->
<path d="M815 335 L1075 190 L1100 180 L1148 183 L1122 240 L1062 335 L1035 352 Z" fill="#9ca1a6"/>
<path d="M918 308 L1112 238 L1078 290 L1045 348 L985 330 Z" fill="#3f444a"/>
<path d="M1062 300 L1110 296 L1104 306 L1058 310 Z" fill="#7d7a6a"/>
<!-- fuselage upper gray -->
<path d="M48 446 C80 425 130 410 200 388 L245 358 C280 348 320 345 360 345 L640 345 L800 336 L850 322 L1030 342 C1045 350 1045 372 1030 380 L985 397 L850 420 L600 445 L200 445 Z" fill="#9a9fa2"/>
<!-- fuselage lower white -->
<path d="M48 446 C70 428 110 415 140 410 L610 404 L560 440 L440 466 L300 472 L95 464 C70 460 50 455 48 446 Z" fill="#ecebe6"/>
<path d="M835 402 L992 392 L945 416 L838 434 Z" fill="#e6e4de"/>
<path d="M90 464 L190 470 L188 486 L95 478 Z" fill="#d9d8d2"/>
<!-- engine -->
<path d="M748 372 C780 360 820 358 842 362 C852 372 852 388 846 398 L760 408 Z" fill="#b9bcbe"/>
<path d="M840 392 L888 388 L888 400 L842 404 Z" fill="#2c2d2f"/>
<!-- wing -->
<path d="M440 462 L790 365 L812 370 L762 402 L735 440 L720 470 L560 490 Z" fill="#74766a"/>
<path d="M440 462 L790 365 L800 367 L470 466 Z" fill="#c9c9c2"/>
<path d="M470 472 L720 470 L790 490 L700 503 L560 492 Z" fill="#44474d"/>
<path d="M660 485 L760 483 L785 492 L700 503 Z" fill="#6f8fb8"/>
<!-- main gear -->
<path d="M585 455 L615 455 L618 530 L598 530 Z" fill="#c7c8c8"/>
<circle cx="594" cy="518" r="19" fill="#1d1e22"/><circle cx="620" cy="545" r="21" fill="#1d1e22"/><circle cx="620" cy="545" r="7" fill="#4b4d52"/>
<!-- nose gear -->
<path d="M176 476 L186 476 L190 515 L181 515 Z" fill="#d6d6d2"/>
<circle cx="186" cy="527" r="18" fill="#24252a"/><circle cx="186" cy="527" r="8" fill="#c9c9c4"/>
<path d="M296 470 L316 472 L326 500 L310 505 Z" fill="#e4e3de"/>
<!-- windows -->
<path d="M208 388 L240 362 L305 360 L300 380 Z" fill="#2b3242"/>
<path d="M262 362 L270 362 L258 384 L250 385 Z" fill="#9a9fa2"/>
<rect x="437" y="366" width="25" height="19" rx="7" fill="#2e3340"/><rect x="508" y="366" width="25" height="19" rx="7" fill="#2e3340"/><rect x="580" y="366" width="25" height="19" rx="7" fill="#2e3340"/>
<rect x="632" y="348" width="10" height="52" fill="#5f6368"/>
<path d="M340 352 V402 M400 352 V402" stroke="#b08a86" stroke-width="3" fill="none"/>
<!-- roundel -->
<circle cx="716" cy="367" r="23" fill="#d8313a"/><circle cx="716" cy="367" r="15" fill="#f2f2f2"/><circle cx="716" cy="367" r="8" fill="#2b4fa0"/>
<text x="298" y="445" text-anchor="middle" font-family="DejaVu Sans, Liberation Sans, sans-serif" font-weight="bold" font-size="38" fill="#33363a">133</text>
</svg></div>
<div style="position:absolute;left:7px;top:189px;font-size:10px;line-height:14px;white-space:nowrap">Image © Kris Van Craenenbroeck</div>

<div class="rw" style="top:214px"><span class="l">Reg.:</span><span class="v"><u>133</u></span></div>
<div class="rw" style="top:233px"><span class="l"></span><span class="v">France</span></div>
<div class="rw" style="top:252px"><span class="l">DB flags:</span><span class="v">military</span></div>
<div class="rw" style="top:271px"><span class="l">Type:</span><span class="v">FA10</span></div>
<div class="rw" style="top:290px"><span class="l"></span><span class="v">DASSAULT Falcon 100</span></div>
<div class="rw" style="top:313px"><span class="l">Type Desc.:</span><span class="v">n/a</span></div>
<div class="rw" style="top:332px"><span class="l">Squawk:</span><span class="v">n/a</span></div>
<div class="rw" style="top:351px"><span class="l">Route:</span><span class="v">n/a</span></div>
<div class="hd" style="top:376px">SPATIAL</div>
<div class="rw" style="top:405px"><span class="l">Groundspeed:</span><span class="v">414<span class=u>kt</span></span></div>
<div class="rw" style="top:424px"><span class="l">Baro. altitude:</span><span class="v">17500<span class=u>ft</span></span></div>
<div class="rw" style="top:443px"><span class="l">WGS84 altitude:</span><span class="v">n/a</span></div>
<div class="rw" style="top:462px"><span class="l">Vert. Rate:</span><span class="v">n/a</span></div>
<div class="rw" style="top:481px"><span class="l">Track:</span><span class="v">251.0°</span></div>
<div class="rw" style="top:500px"><span class="l">Pos.:</span><span class="v">48.744°,<span class=u>-2.954°</span></span></div>
<div class="rw" style="top:519px"><span class="l">Distance:</span><span class="v">428.1<span class=u>nmi</span></span></div>
<div class="hd" style="top:544px">SIGNAL</div>
<div class="rw" style="top:573px"><span class="l">Source:</span><span class="v">Other</span></div>
<div class="rw" style="top:592px"><span class="l">RSSI:</span><span class="v">n/a</span></div>
<div class="rw" style="top:611px"><span class="l">Msg. Rate:</span><span class="v">0.0</span></div>
<div class="rw" style="top:630px"><span class="l">Messages:</span><span class="v">245</span></div>
<div class="rw" style="top:655px"><span class="l">Last Pos.:</span><span class="v">190 s</span></div>
<div class="rw" style="top:674px"><span class="l">Last Seen:</span><span class="v">190 s</span></div>
<div class="hd" style="top:699px">FMS SEL</div>
<div class="rw" style="top:728px"><span class="l">Sel. Alt.:</span><span class="v">n/a</span></div>
<div class="rw" style="top:747px"><span class="l">Sel. Head.:</span><span class="v">n/a</span></div>
<div class="hd" style="top:772px">WIND</div>
<div class="rw" style="top:801px"><span class="l">Speed:</span><span class="v">n/a</span></div>
<div class="rw" style="top:820px"><span class="l">Direction (from):</span><span class="v">n/a</span></div>
<div class="rw" style="top:839px"><span class="l">TAT / OAT:</span><span class="v">n/a</span></div>
<div class="hd" style="top:864px">SPEED</div>
<div class="rw" style="top:893px"><span class="l">Ground:</span><span class="v">414<span class=u>kt</span></span></div>
<div class="rw" style="top:912px"><span class="l">True:</span><span class="v">n/a</span></div>
<div class="rw" style="top:931px"><span class="l">Indicated:</span><span class="v">n/a</span></div>
<div class="rw" style="top:950px"><span class="l">Mach:</span><span class="v">n/a</span></div>
<div class="hd" style="top:975px">ALTITUDE</div>
<div class="rw" style="top:1004px"><span class="l">Barometric:</span><span class="v">17500<span class=u>ft</span></span></div>
<div class="rw" style="top:1023px"><span class="l">Baro. Rate:</span><span class="v">n/a</span></div>
<div class="rw" style="top:1042px"><span class="l">Geom. WGS84:</span><span class="v">n/a</span></div>
<div class="rw" style="top:1061px"><span class="l">Geom. Rate:</span><span class="v">n/a</span></div>
<div class="rw" style="top:1080px"><span class="l">QNH:</span><span class="v">n/a</span></div>
<div class="hd" style="top:1105px">DIRECTION</div>
<div class="rw" style="top:1134px"><span class="l">Ground Track:</span><span class="v">251.0°</span></div>
<div class="rw" style="top:1153px"><span class="l">True Heading:</span><span class="v">n/a</span></div>
<div class="rw" style="top:1172px"><span class="l">Magnetic Heading:</span><span class="v">n/a</span></div>
<div class="rw" style="top:1191px"><span class="l">Magnetic Decl.:</span><span class="v">0.5°</span></div>
<div class="rw" style="top:1210px"><span class="l">Track Rate:</span><span class="v">n/a</span></div>
<div class="rw" style="top:1229px"><span class="l">Roll:</span><span class="v">n/a</span></div>
<div class="hd" style="top:1254px">STUFF</div>
<div class="rw" style="top:1283px"><span class="l">Nav. Modes:</span><span class="v">n/a</span></div>
<div class="rw" style="top:1302px"><span class="l">ADS-B Ver.:</span><span class="v">none</span></div>
<div class="rw" style="top:1321px"><span class="l">Category:</span><span class="v">n/a</span></div>
<div class="hd" style="top:1361px">ACCURACY</div>
<div class="rw" style="top:1390px"><span class="l">NAC<sub>P</sub>:</span><span class="v">n/a</span></div>
<div class="rw" style="top:1413px"><span class="l">SIL:</span><span class="v">n/a</span></div>
<div class="rw" style="top:1432px"><span class="l">NAC<sub>V</sub>:</span><span class="v">n/a</span></div>
<div class="rw" style="top:1454px"><span class="l">NIC<sub>BARO</sub>:</span><span class="v">n/a</span></div>
<div class="rw" style="top:1477px"><span class="l">R<sub>C</sub>:</span><span class="v">n/a</span></div>
<div class="learn" style="top:1516px">Learn more about Mode S<br>data type by hovering over<br>each data label.</div>
<div class="rw" style="top:1582px;left:0;width:185px"><span class="l">Pos. epoch:</span><span class="v" style="right:0px">1763649370</span></div>
</div>
<div id="lscroll"><div class="thumb"></div>
<svg class="arr" style="top:0" width="15" height="15" viewBox="0 0 15 15"><path d="M3.5 9.5 L7.5 5.5 L11.5 9.5 Z" fill="#a3a3a3"/></svg>
<svg class="arr" style="top:1585px" width="15" height="15" viewBox="0 0 15 15"><path d="M3.5 5.5 L7.5 9.5 L11.5 5.5 Z" fill="#505050"/></svg>
</div>
<div id="right">
<!-- header -->
<div class="rt b" style="left:21px;top:11px;color:#bdbdbd"><u style="color:#d4d4d4">tar1090</u> (3.14.1791) decoder: <u style="color:#d4d4d4">readsb</u></div>
<div id="tog"><svg width="30" height="30" viewBox="0 0 30 30"><path d="M5 15.3 L12.1 9.2 L12.1 21.4 Z M24.9 15.3 L17.6 9.2 L17.6 21.4 Z" fill="#fff"/></svg></div>
<div class="rt b" style="left:11px;top:49px">Total Aircraft: <span class="n">1</span></div>
<div class="rt b" style="left:152px;top:41px">Messages:</div>
<div class="rt" style="left:152px;top:56px;color:#d6d6d6">1626.1/sec</div>
<div class="rt b" style="left:11px;top:75px">With Position: <span class="n">1</span></div>
<div class="rt b" style="left:11px;top:94px">Stats available</div>
<div class="rt b" style="left:11px;top:109px"><u style="color:#0000ee">here</u></div>
<!-- tabs -->
<div id="tabs">
<div class="tab act" style="left:2px;width:70px">Search</div>
<div class="tab" style="left:75px;width:64px">Filters</div>
<div class="tab" style="left:142px;width:83px">Columns</div>
</div>
<!-- search -->
<div class="rt b" style="left:14px;top:182px">Search:</div>
<div class="inp" style="left:14px;top:198px"></div>
<div class="btn" style="left:126px;top:199px;width:57px">Search</div>
<div class="btn" style="left:14px;top:220px;width:95px">Clear Search</div>
<div class="rt b" style="left:14px;top:239px">Jump to Airport or Latitude,</div>
<div class="rt b" style="left:14px;top:254px">Longitude:</div>
<div class="inp" style="left:14px;top:270px"></div>
<div class="btn" style="left:126px;top:271px;width:45px">Jump</div>
<div class="btn" style="left:179px;top:271px;width:46px">Clear</div>
<!-- table -->
<div class="th" style="left:7px;width:20px"></div>
<div class="th" style="left:29px;width:59px">Callsign</div>
<div class="th" style="left:90px;width:42px">Route</div>
<div class="th" style="left:134px;width:35px">Type</div>
<div class="th" style="left:171px;width:52px">Squawk</div>
<div class="th" style="left:225px;width:48px">Alt. (ft)</div>
<div class="th" style="left:275px;width:40px;text-align:left;text-indent:5px">Spd</div>
<div class="td" style="left:7px;width:20px"><svg style="position:absolute;left:1px;top:3px" width="18" height="12" viewBox="0 0 18 12"><rect width="6" height="12" fill="#0a3ec4"/><rect x="6" width="6" height="12" fill="#f4f4f4"/><rect x="12" width="6" height="12" fill="#ee2436"/></svg></div>
<div class="td" style="left:29px;width:59px"><u style="margin-left:1px">FNY55F7</u></div>
<div class="td" style="left:90px;width:42px"></div>
<div class="td" style="left:134px;width:35px"><span style="margin-left:1px">FA10</span></div>
<div class="td" style="left:171px;width:52px"></div>
<div class="td" style="left:225px;width:48px;text-align:right"><span style="margin-right:1px">17500</span></div>
<div class="td" style="left:275px;width:40px"></div>
<!-- legend -->
<div class="lg" style="left:7px;top:365px;width:50px;background:#2a5366">ADS-B</div>
<div class="lg" style="left:61px;top:365px;width:93px;background:#2b6643">UAT / ADS-R</div>
<div class="lg" style="left:158px;top:365px;width:44px;background:#5e5930">MLAT</div>
<div class="lg" style="left:206px;top:365px;width:43px;background:#682a42">TIS-B</div>
<div class="lg" style="left:7px;top:388px;width:59px;background:#2b2b67">Mode-S</div>
<div class="lg" style="left:70px;top:388px;width:29px;background:#3b2241">AIS</div>
<div class="lg" style="left:103px;top:388px;width:51px;background:#2b6643">ADS-C</div>
<!-- hscroll -->
<div id="hscroll"><div class="thumb"></div>
<svg style="position:absolute;left:0;top:0" width="15" height="15" viewBox="0 0 15 15"><path d="M9.5 3.5 L5.5 7.5 L9.5 11.5 Z" fill="#a3a3a3"/></svg>
<svg style="position:absolute;right:0;top:0" width="15" height="15" viewBox="0 0 15 15"><path d="M5.5 3.5 L9.5 7.5 L5.5 11.5 Z" fill="#505050"/></svg>
</div>

</div>
</body></html>
